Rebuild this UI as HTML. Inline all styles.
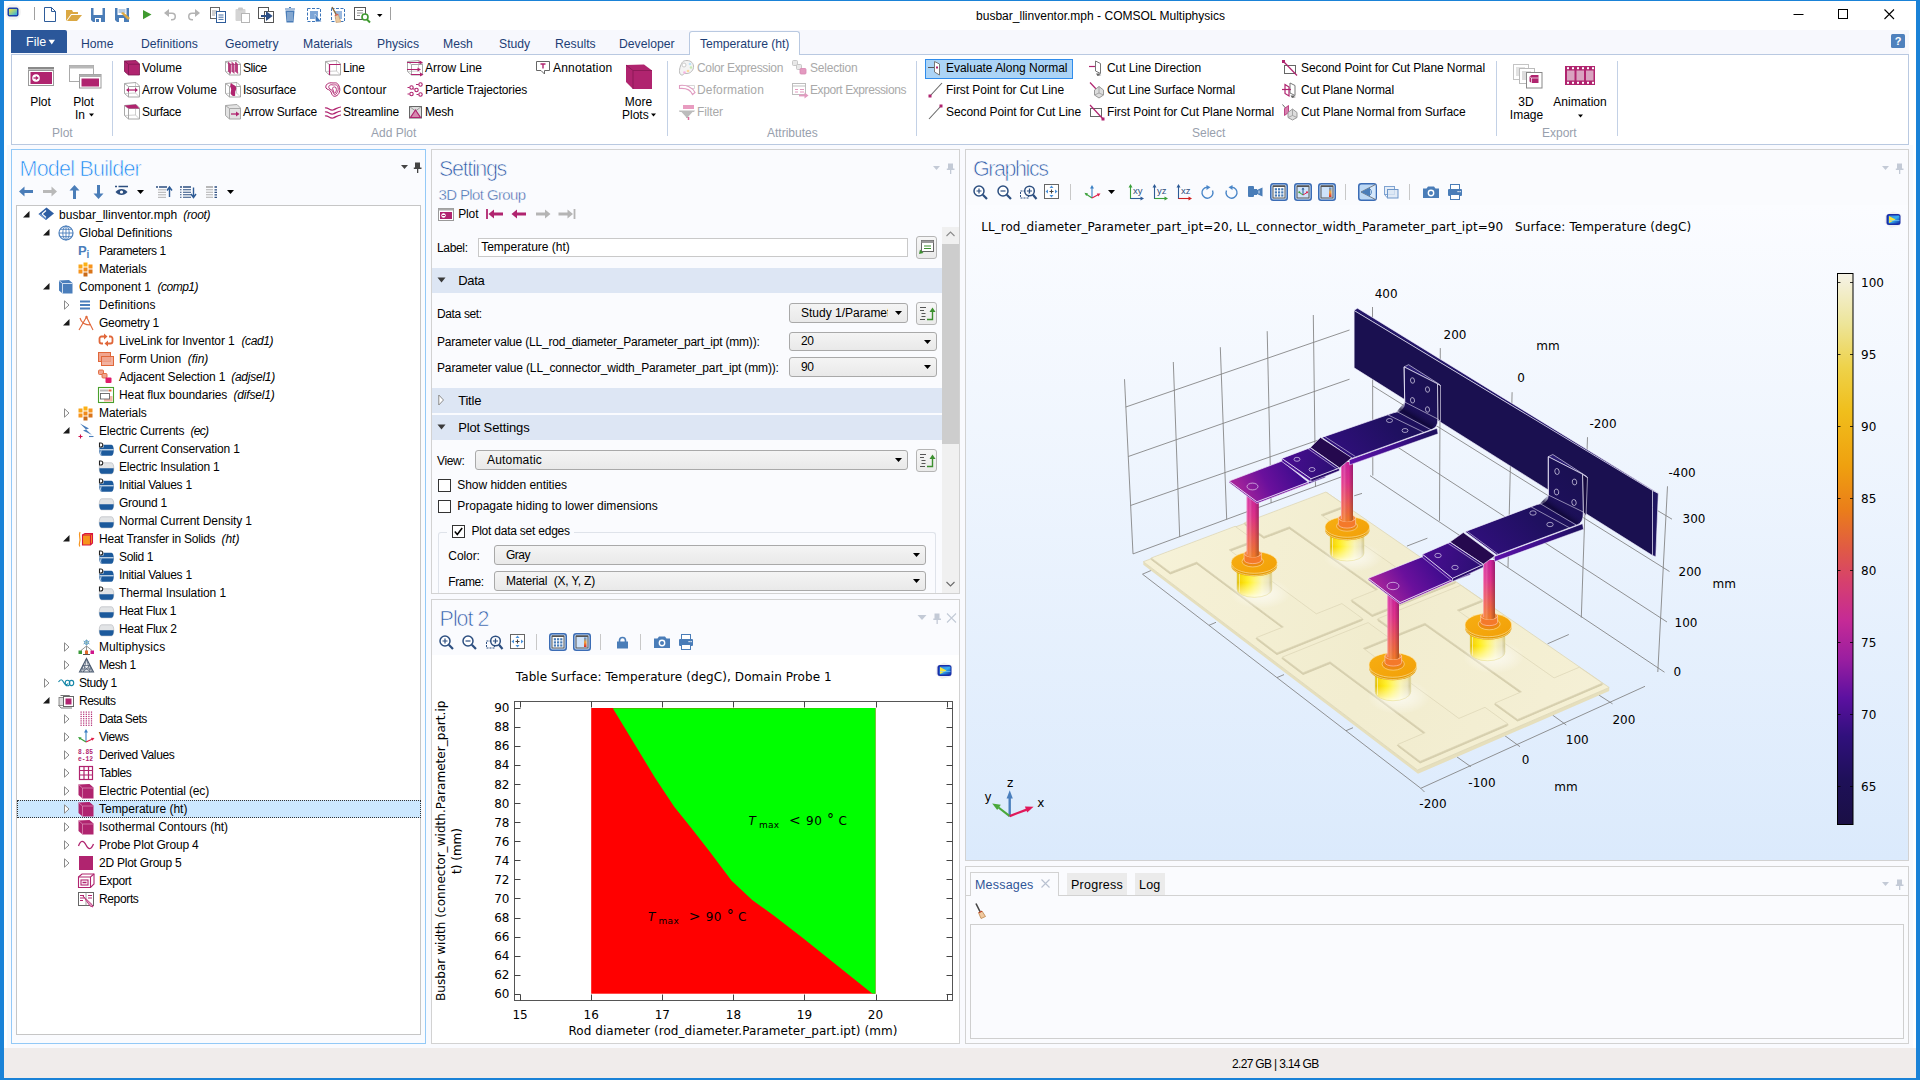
<!DOCTYPE html>
<html lang="en"><head><meta charset="utf-8"><title>busbar_llinventor.mph - COMSOL Multiphysics</title>
<style>
*{box-sizing:border-box;margin:0;padding:0}
html,body{width:1920px;height:1080px;overflow:hidden;background:#fff}
body{font-family:"Liberation Sans",sans-serif;font-size:12px;color:#000;position:relative}
.a{position:absolute}
.t{position:absolute;white-space:pre;line-height:14px;height:14px}
.g{color:#a9a9a9}
.dj{font-family:"DejaVu Sans",sans-serif}
svg{position:absolute;overflow:visible}
i{font-style:italic}
</style></head>
<body>
<div class="a" style="left:0px;top:0px;width:1920px;height:1080px;background:#fff"></div>
<div class="a" style="left:7px;top:145px;width:1906px;height:903px;background:#f9fafe"></div>
<div class="a" style="left:0px;top:0px;width:4px;height:1080px;background:#1a82d7"></div>
<div class="a" style="left:1916px;top:0px;width:4px;height:1080px;background:#1a82d7"></div>
<div class="a" style="left:0px;top:0px;width:1920px;height:1px;background:#1a82d7"></div>
<div class="a" style="left:0px;top:1078px;width:1920px;height:2px;background:#1a82d7"></div>
<div class="a" style="left:4px;top:1048px;width:1912px;height:30px;background:#f0eceb"></div>
<div class="t " style="left:1232px;top:1057px;letter-spacing:-0.667px;">2.27 GB | 3.14 GB</div>
<div class="t " style="left:976px;top:9px;letter-spacing:0.016px;">busbar_llinventor.mph - COMSOL Multiphysics</div>
<svg style="left:1790px;top:5px" width="110" height="20" viewBox="0 0 110 20"><path d="M3.5 9.5h10" stroke="#000" fill="none"/><rect x="48.5" y="4.5" width="9" height="9" stroke="#000" fill="none"/><path d="M94.5 4.5l9.5 9.5M104 4.5l-9.5 9.5" stroke="#000" stroke-width="1.1" fill="none"/></svg>
<svg style="left:0px;top:0px" width="400" height="30" viewBox="0 0 400 30"><defs><linearGradient id="lg1" x1="0" y1="0" x2="1" y2="1"><stop offset="0" stop-color="#f7e23a"/><stop offset=".6" stop-color="#7fc8a0"/><stop offset="1" stop-color="#2aa6e8"/></linearGradient></defs><circle cx="13" cy="12" r="8" fill="#eee" opacity=".7"/><rect x="7.5" y="7.5" width="11" height="9" rx="2" fill="#1c3fa8"/><rect x="9" y="9" width="8" height="6" fill="url(#lg1)"/><path d="M34.5 7v13M390.5 7v13" stroke="#a0a0a0"/><path d="M44.5 7.5h7l4 4v10h-11z" fill="#fff" stroke="#2e5c9a"/><path d="M51.5 7.5v4h4" fill="none" stroke="#2e5c9a"/><path d="M66 10h6l1 2h5v2h-7l-5 7z" fill="#dba843"/><path d="M71.5 15h10.5l-5 6h-10z" fill="#dba843"/><path d="M91 8h14v14h-12l-2-2z" fill="#4a7db8"/><rect x="93.500" y="8" width="9" height="7" fill="#fff"/><rect x="95" y="18" width="6" height="4" fill="#fff"/><rect x="96" y="19" width="3" height="3" fill="#4a7db8"/><path d="M115 8h14v14h-12l-2-2z" fill="#4a7db8"/><rect x="117.500" y="8" width="9" height="7" fill="#fff"/><path d="M118.500 10h7M118.500 12h7" stroke="#4a7db8" stroke-width=".8"/><rect x="119" y="18" width="5" height="4" fill="#fff"/><path d="M121 13l7 7 2-2-7-6z" fill="#dba843"/><path d="M143 10l8.500 4.600-8.500 4.600z" fill="#3f9a2f"/><path d="M169 9l-5 4 5 4v-3h3a2.500 2.500 0 0 1 0 5h-1v1.500h1a4 4 0 0 0 0-8h-3z" fill="#b3b3b3"/><path d="M195 9l5 4-5 4v-3h-3a2.500 2.500 0 0 0 0 5h1v1.500h-1a4 4 0 0 1 0-8h3z" fill="#b3b3b3"/><rect x="210.500" y="7.500" width="9" height="11" fill="#fff" stroke="#666"/><path d="M212 11h5M212 13h5M212 15h3" stroke="#888" stroke-width=".8"/><rect x="216.500" y="11.500" width="9" height="11" fill="#fff" stroke="#2e5c9a"/><path d="M218.500 15h5M218.500 17.200h5M218.500 19.400h5" stroke="#2e5c9a" stroke-width=".9"/><rect x="235.500" y="9" width="10" height="12" rx="1" fill="#d4d4d4"/><rect x="238" y="7.500" width="5" height="3" rx="1" fill="#c8c8c8"/><rect x="241.500" y="13.500" width="8" height="9" fill="#fff" stroke="#b5b5b5"/><rect x="258.500" y="7.500" width="10" height="11" fill="#fff" stroke="#555"/><rect x="264.500" y="11.500" width="9" height="11" fill="#fff" stroke="#555"/><path d="M261 16h8M267 13l4 3-4 3z" stroke="#2c4f86" stroke-width="2" fill="#2c4f86"/><path d="M285 9h10M289 7.500h2" stroke="#4a7db8" stroke-width="1.200"/><path d="M285.500 10.500h9l-1 12h-7z" fill="#4a7db8"/><path d="M288 12v9M290 12v9M292 12v9" stroke="#dce7f5" stroke-width=".8"/><rect x="307.500" y="8.500" width="13" height="13" fill="none" stroke="#3b74b9" stroke-dasharray="3 1.500"/><rect x="310" y="11" width="8" height="8" fill="#7fa6d6"/><path d="M315 14l6.500 8-3-.5-3 .5z" fill="#3b74b9" stroke="#fff" stroke-width=".5"/><rect x="331.500" y="8.500" width="13" height="13" fill="none" stroke="#3b74b9" stroke-dasharray="3 1.500"/><rect x="335" y="11" width="7" height="8" fill="#9bb9df"/><path d="M332 7l5 9" stroke="#8a6a3b" stroke-width="1.500"/><path d="M335 15l3-1 3 8-5 .5z" fill="#e8c9a0" stroke="#b5895a" stroke-width=".5"/><path d="M335 15.500l3-1" stroke="#d9534f" stroke-width="1.200"/><rect x="354.500" y="7.500" width="11" height="12" fill="#fff" stroke="#555"/><path d="M357 10.500h6M357 13h6M357 15.500h3" stroke="#777" stroke-width=".8"/><circle cx="365" cy="17" r="3" fill="#fff" stroke="#3f9a2f" stroke-width="1.600"/><path d="M367 19.500l3 3" stroke="#3f9a2f" stroke-width="2"/><path d="M377 14h5.500l-2.750 3z" fill="#000"/></svg>
<div class="a" style="left:11px;top:149px;width:415px;height:895px;background:#fafbfe;border:1px solid #93c9f7"></div>
<div class="a" style="left:16px;top:205px;width:405px;height:830px;background:#fff;border:1px solid #c6c6c6"></div>
<div class="a" style="left:431px;top:149px;width:529px;height:445px;background:#fafbfe;border:1px solid #d2d2d2"></div>
<div class="a" style="left:431px;top:599px;width:529px;height:445px;background:#fafbfe;border:1px solid #d2d2d2"></div>
<div class="a" style="left:965px;top:149px;width:944px;height:712px;background:#fafbfe;border:1px solid #d2d2d2"></div>
<div class="a" style="left:965px;top:866px;width:944px;height:178px;background:#fafbfe;border:1px solid #d2d2d2"></div>
<div class="a" style="left:11px;top:30px;width:1898px;height:24px;background:#f7f8fd"></div>
<div class="a" style="left:11px;top:54px;width:1898px;height:91px;background:#fff;border:1px solid #b9c9e1"></div>
<div class="a" style="left:11px;top:30px;width:56px;height:23px;background:#2b579a;border-radius:0 2px 0 0"></div>
<div class="t " style="left:26px;top:35px;color:#fff;font-size:12.5px">File</div>
<svg style="left:48px;top:39px" width="8" height="6" viewBox="0 0 8 6"><path d="M0.500 0.800h6.500l-3.250 4.700z" fill="#fff"/></svg>
<div class="t " style="left:81px;top:37px;color:#1d3e75;font-size:12.2px">Home</div>
<div class="t " style="left:141px;top:37px;color:#1d3e75;font-size:12.2px">Definitions</div>
<div class="t " style="left:225px;top:37px;color:#1d3e75;font-size:12.2px">Geometry</div>
<div class="t " style="left:303px;top:37px;color:#1d3e75;font-size:12.2px">Materials</div>
<div class="t " style="left:377px;top:37px;color:#1d3e75;font-size:12.2px">Physics</div>
<div class="t " style="left:443px;top:37px;color:#1d3e75;font-size:12.2px">Mesh</div>
<div class="t " style="left:499px;top:37px;color:#1d3e75;font-size:12.2px">Study</div>
<div class="t " style="left:555px;top:37px;color:#1d3e75;font-size:12.2px">Results</div>
<div class="t " style="left:619px;top:37px;color:#1d3e75;font-size:12.2px">Developer</div>
<div class="a" style="left:689px;top:31px;width:111px;height:24px;background:#fff;border:1px solid #b9c9e1;border-bottom:none;border-radius:3px 3px 0 0"></div>
<div class="t " style="left:700px;top:37px;color:#1d3e75;font-size:12.2px;letter-spacing:-0.05px">Temperature (ht)</div>
<div class="a" style="left:1891px;top:34px;width:14px;height:14px;background:#4f81bd;border-radius:1.500px;color:#fff;font-weight:bold;font-size:11px;line-height:14px;text-align:center">?</div>
<div class="a" style="left:112px;top:61px;width:1px;height:75px;background:#c3d1e6"></div>
<div class="a" style="left:667px;top:61px;width:1px;height:75px;background:#c3d1e6"></div>
<div class="a" style="left:916px;top:61px;width:1px;height:75px;background:#c3d1e6"></div>
<div class="a" style="left:1496px;top:61px;width:1px;height:75px;background:#c3d1e6"></div>
<div class="a" style="left:1617px;top:61px;width:1px;height:75px;background:#c3d1e6"></div>
<div class="t " style="left:52px;top:126px;color:#98a0ad;font-size:12px">Plot</div>
<div class="t " style="left:371px;top:126px;color:#98a0ad;font-size:12px">Add Plot</div>
<div class="t " style="left:767px;top:126px;color:#98a0ad;font-size:12px">Attributes</div>
<div class="t " style="left:1192px;top:126px;color:#98a0ad;font-size:12px">Select</div>
<div class="t " style="left:1542px;top:126px;color:#98a0ad;font-size:12px">Export</div>
<svg style="left:124px;top:60px" width="16" height="16" viewBox="0 0 16 16"><path d="M0.500 1L12 0.500L15.500 4v11H4.500L0.500 11.500z" fill="#b0246f" stroke="#7d1650" stroke-width=".8"/><path d="M0.500 1L4.500 4.200H15.500M4.500 4.200V15" fill="none" stroke="#7d1650" stroke-width=".8"/></svg>
<div class="t " style="left:142px;top:61px;letter-spacing:-0.004px;">Volume</div>
<svg style="left:124px;top:82px" width="16" height="16" viewBox="0 0 16 16"><path d="M0.500 1.500L12 0.500L15.500 4v11H4.500L0.500 11.500z" fill="none" stroke="#a8a8a8"/><path d="M0.500 1.500L4.500 4.500H15.500M4.500 4.500V15" fill="none" stroke="#a8a8a8"/><path d="M0.500 11.500L11.500 11L15.500 15M11.500 11V0.500" fill="none" stroke="#a8a8a8" stroke-width=".7" opacity=".8"/><path d="M3 8h10" stroke="#b0246f" stroke-width="1.300"/><path d="M2 8l3-2.200v4.400zM14 8l-3-2.200v4.400z" fill="#b0246f"/></svg>
<div class="t " style="left:142px;top:83px;letter-spacing:0.025px;">Arrow Volume</div>
<svg style="left:124px;top:104px" width="16" height="16" viewBox="0 0 16 16"><path d="M0.500 1.500L12 0.500L15.500 4v11H4.500L0.500 11.500z" fill="none" stroke="#a8a8a8"/><path d="M0.500 1.500L4.500 4.500H15.500M4.500 4.500V15" fill="none" stroke="#a8a8a8"/><path d="M0.500 11.500L11.500 11L15.500 15M11.500 11V0.500" fill="none" stroke="#a8a8a8" stroke-width=".7" opacity=".8"/><path d="M0.500 1.500L12 0.500L15.500 4.500H4.500z" fill="#b0246f"/></svg>
<div class="t " style="left:142px;top:105px;letter-spacing:-0.337px;">Surface</div>
<svg style="left:225px;top:60px" width="16" height="16" viewBox="0 0 16 16"><path d="M0.500 1.500L12 0.500L15.500 4v11H4.500L0.500 11.500z" fill="none" stroke="#a8a8a8"/><path d="M0.500 1.500L4.500 4.500H15.500M4.500 4.500V15" fill="none" stroke="#a8a8a8"/><path d="M0.500 11.500L11.500 11L15.500 15M11.500 11V0.500" fill="none" stroke="#a8a8a8" stroke-width=".7" opacity=".8"/><path d="M3 1.500l3 2.500v10l-3-2.500zM6.500 1.500l3 2.500v10l-3-2.500zM10 1.500l3 2.500v10l-3-2.500z" fill="#b0246f" opacity=".85"/></svg>
<div class="t " style="left:243px;top:61px;letter-spacing:-0.462px;">Slice</div>
<svg style="left:225px;top:82px" width="16" height="16" viewBox="0 0 16 16"><path d="M0.500 1.500L12 0.500L15.500 4v11H4.500L0.500 11.500z" fill="none" stroke="#a8a8a8"/><path d="M0.500 1.500L4.500 4.500H15.500M4.500 4.500V15" fill="none" stroke="#a8a8a8"/><path d="M0.500 11.500L11.500 11L15.500 15M11.500 11V0.500" fill="none" stroke="#a8a8a8" stroke-width=".7" opacity=".8"/><path d="M6 1c2 2 4 2 5 4s-1 4-1 6 1 3-1 3-4-2-3-5-2-4 0-8z" fill="#b0246f"/></svg>
<div class="t " style="left:243px;top:83px;letter-spacing:-0.236px;">Isosurface</div>
<svg style="left:225px;top:104px" width="16" height="16" viewBox="0 0 16 16"><path d="M0.500 1.500L12 0.500L15.500 4v11H4.500L0.500 11.500z" fill="#e3e3e3" stroke="#a8a8a8"/><path d="M0.500 1.500L4.500 4.500H15.500M4.500 4.500V15" fill="none" stroke="#a8a8a8"/><path d="M6 10h6" stroke="#b0246f" stroke-width="1.300"/><path d="M14.500 10l-3.500-2.500v5z" fill="#b0246f"/></svg>
<div class="t " style="left:243px;top:105px;letter-spacing:-0.156px;">Arrow Surface</div>
<svg style="left:325px;top:60px" width="16" height="16" viewBox="0 0 16 16"><path d="M0.500 1.500L12 0.500L15.500 4v11H4.500L0.500 11.500z" fill="none" stroke="#a8a8a8"/><path d="M0.500 1.500L4.500 4.500H15.500M4.500 4.500V15" fill="none" stroke="#a8a8a8"/><path d="M0.500 11.500L11.500 11L15.500 15M11.500 11V0.500" fill="none" stroke="#a8a8a8" stroke-width=".7" opacity=".8"/><path d="M4.500 15V4.500H15.500" fill="none" stroke="#b0246f" stroke-width="1.200"/></svg>
<div class="t " style="left:343px;top:61px;letter-spacing:-0.246px;">Line</div>
<svg style="left:325px;top:82px" width="16" height="16" viewBox="0 0 16 16"><path d="M8 1C3 0 0 3 1 6c1 2 4 1 5 4s2 5 5 4 5-6 3-10S11 1 8 1z" fill="none" stroke="#b0246f"/><path d="M8 3C5 2 3 4 4 6s3 1 4 4 2 3 3 2 3-4 2-7-3-2-5-2z" fill="none" stroke="#b0246f" stroke-width=".9"/><path d="M9 5c-1 0-2 1-1 3s1 4 2 3 2-3 1-5-1-1-2-1z" fill="none" stroke="#b0246f" stroke-width=".9"/></svg>
<div class="t " style="left:343px;top:83px;letter-spacing:0.144px;">Contour</div>
<svg style="left:325px;top:104px" width="16" height="16" viewBox="0 0 16 16"><path d="M0 4c3-1 5 3 8 2s5-3 8-3M0 8c3-1 5 3 8 2s5-3 8-3M0 12c3-1 5 3 8 2s5-3 8-3" fill="none" stroke="#b0246f" stroke-width="1.200"/></svg>
<div class="t " style="left:343px;top:105px;letter-spacing:-0.136px;">Streamline</div>
<svg style="left:407px;top:60px" width="16" height="16" viewBox="0 0 16 16"><path d="M0.500 1.500L12 0.500L15.500 4v11H4.500L0.500 11.500z" fill="none" stroke="#a8a8a8"/><path d="M0.500 1.500L4.500 4.500H15.500M4.500 4.500V15" fill="none" stroke="#a8a8a8"/><path d="M0.500 11.500L11.500 11L15.500 15M11.500 11V0.500" fill="none" stroke="#a8a8a8" stroke-width=".7" opacity=".8"/><path d="M0 2.500h13M0 9.500h11M4 14.500h10" stroke="#b0246f" stroke-width="1.100"/><path d="M16 2.500l-3.500-2v4zM14 9.500l-3.500-2v4zM16.500 14.500l-3.500-2v4z" fill="#b0246f"/></svg>
<div class="t " style="left:425px;top:61px;letter-spacing:-0.036px;">Arrow Line</div>
<svg style="left:407px;top:82px" width="16" height="16" viewBox="0 0 16 16"><g fill="#fff" stroke="#b0246f" stroke-width="1.100"><circle cx="13.500" cy="2.500" r="1.700"/><circle cx="4.500" cy="5.500" r="1.700"/><circle cx="9.500" cy="8" r="1.700"/><circle cx="4.500" cy="12" r="1.700"/><circle cx="13.500" cy="12.500" r="1.700"/></g><path d="M9 2.500h2.500M0.500 5.500h2M6 7h1.500M0.500 12h2M9.500 12.500h2" stroke="#b0246f"/></svg>
<div class="t " style="left:425px;top:83px;letter-spacing:-0.160px;">Particle Trajectories</div>
<svg style="left:407px;top:104px" width="16" height="16" viewBox="0 0 16 16"><rect x="2.500" y="2.500" width="12" height="11.500" fill="#ddd" stroke="#666"/><path d="M2.500 2.500L8.500 7 14.500 2.500" fill="none" stroke="#888" stroke-width=".8"/><path d="M8.500 6L13.500 13.500H3.500z" fill="#d58aae" stroke="#b0246f" stroke-width="1.200"/></svg>
<div class="t " style="left:425px;top:105px;letter-spacing:-0.211px;">Mesh</div>
<svg style="left:536px;top:60px" width="16" height="16" viewBox="0 0 16 16"><path d="M0.500 1.500h13v9h-5v3.500l-3.500-3.500h-4.500z" fill="#fff" stroke="#666"/><path d="M4.500 4h5M7 4v4.500" stroke="#b0246f" stroke-width="1.400"/></svg>
<div class="t " style="left:553px;top:61px;letter-spacing:0.212px;">Annotation</div>
<svg style="left:679px;top:60px" width="16" height="16" viewBox="0 0 16 16"><path d="M8 0.500c4 0 7 3 6.500 7S10 14 7 13.500 5 15.500 2.500 15 0 10 1.500 6 4 0.500 8 0.500z" fill="#f4f4f4" stroke="#bbb"/><circle cx="5" cy="5" r="2" fill="#fff" stroke="#ccc"/><circle cx="11" cy="4" r="1.300" fill="#bfe3f7"/><circle cx="12" cy="7.500" r="1.300" fill="#c7eab5"/><circle cx="9" cy="11" r="1.300" fill="#fbd9a0"/><circle cx="5.500" cy="12.500" r="1.300" fill="#f7b3e0"/></svg>
<div class="t g" style="left:697px;top:61px;letter-spacing:-0.336px;">Color Expression</div>
<svg style="left:679px;top:82px" width="16" height="16" viewBox="0 0 16 16"><path d="M0.500 3.500h15v3h-8z" fill="#fff" stroke="#ccc" stroke-width=".8"/><path d="M0.500 3.500c7-1 13 2 15.500 7l-2.500 2c-2-5-7-6.500-13-6z" fill="#fff" stroke="#e09cc1" stroke-width="1.100"/></svg>
<div class="t g" style="left:697px;top:83px;letter-spacing:0.149px;">Deformation</div>
<svg style="left:679px;top:104px" width="16" height="16" viewBox="0 0 16 16"><rect x="4" y="1" width="11" height="4" fill="#e89cc0"/><path d="M0 6.500h16l-1 1.500h-1.500l-4.500 5v1h-2v-1l-4.500-5h-2z" fill="#bcbcbc"/><path d="M9.500 13v3" stroke="#e06a9f" stroke-width="1.500"/></svg>
<div class="t g" style="left:697px;top:105px;letter-spacing:-0.111px;">Filter</div>
<svg style="left:792px;top:60px" width="16" height="16" viewBox="0 0 16 16"><g fill="#e8e8e8" stroke="#bdbdbd" stroke-width=".8"><rect x="0.500" y="0.500" width="5" height="5" rx="1"/><rect x="4.500" y="4.500" width="5" height="5" rx="1"/></g><rect x="8" y="8.500" width="6" height="5.500" rx="1" fill="#e39ac0" stroke="#d887b1" stroke-width=".8"/></svg>
<div class="t g" style="left:810px;top:61px;letter-spacing:-0.207px;">Selection</div>
<svg style="left:792px;top:82px" width="16" height="16" viewBox="0 0 16 16"><rect x="0.500" y="1.500" width="13" height="11" fill="#fff" stroke="#bdbdbd"/><path d="M0.500 4h13" stroke="#bdbdbd"/><path d="M3 7.500h3M3 10h3M8 7.500h4M8 10h4" stroke="#e39ac0" stroke-width="1.100"/><path d="M7 13.500h6" stroke="#e39ac0" stroke-width="1.800"/><path d="M16.500 13.500l-4-3v6z" fill="#e39ac0"/></svg>
<div class="t g" style="left:810px;top:83px;letter-spacing:-0.410px;">Export Expressions</div>
<div class="a" style="left:925px;top:59px;width:148px;height:20px;background:#acd4f6;border:1px solid #2f8cec"></div>
<svg style="left:928px;top:60px" width="16" height="16" viewBox="0 0 16 16"><path d="M0 7.500h8" stroke="#555" stroke-width="1"/><path d="M6.500 1.500L11.500 4v11L6.500 12z" fill="#fff" stroke="#777"/><rect x="8" y="6.500" width="2" height="2" fill="#b0246f"/></svg>
<div class="t " style="left:946px;top:61px;letter-spacing:-0.027px;">Evaluate Along Normal</div>
<svg style="left:928px;top:82px" width="16" height="16" viewBox="0 0 16 16"><path d="M2 14L14 1" stroke="#666" stroke-width="1.100"/><rect x="0.500" y="12.500" width="3" height="3" fill="#b0246f"/></svg>
<div class="t " style="left:946px;top:83px;letter-spacing:-0.057px;">First Point for Cut Line</div>
<svg style="left:928px;top:104px" width="16" height="16" viewBox="0 0 16 16"><path d="M1 15L13 2" stroke="#666" stroke-width="1.100"/><rect x="11.500" y="0.500" width="3" height="3" fill="#b0246f"/></svg>
<div class="t " style="left:946px;top:105px;letter-spacing:-0.070px;">Second Point for Cut Line</div>
<svg style="left:1089px;top:60px" width="16" height="16" viewBox="0 0 16 16"><path d="M0 6.500h8" stroke="#b0246f" stroke-width="1.200"/><path d="M6.500 1L11.500 3.500v10L6.500 11z" fill="#fff" stroke="#777"/><path d="M7 13.500h4l-.5 1 2 .5-4 1z" fill="#666"/></svg>
<div class="t " style="left:1107px;top:61px;letter-spacing:-0.076px;">Cut Line Direction</div>
<svg style="left:1089px;top:82px" width="16" height="16" viewBox="0 0 16 16"><path d="M1 0.500L8 8" stroke="#b0246f" stroke-width="1.200"/><path d="M10 4.500L14.500 8v5L10 16 5.500 13V8z" fill="#ddd" stroke="#999"/><path d="M10 4.500v6.500l4.500 2M10 11l-4.500 2" fill="none" stroke="#999" stroke-width=".8"/></svg>
<div class="t " style="left:1107px;top:83px;letter-spacing:-0.147px;">Cut Line Surface Normal</div>
<svg style="left:1089px;top:104px" width="16" height="16" viewBox="0 0 16 16"><rect x="1.500" y="4.500" width="11" height="8" fill="#fff" stroke="#666"/><path d="M1 1L14 15" stroke="#b0246f" stroke-width="1.200"/><rect x="12.500" y="13.500" width="3" height="3" fill="#b0246f"/></svg>
<div class="t " style="left:1107px;top:105px;letter-spacing:-0.075px;">First Point for Cut Plane Normal</div>
<svg style="left:1282px;top:60px" width="16" height="16" viewBox="0 0 16 16"><rect x="2.500" y="5.500" width="11" height="8" fill="#fff" stroke="#666"/><path d="M1.500 1.500L15 15.500" stroke="#b0246f" stroke-width="1.200"/><rect x="0" y="0" width="3" height="3" fill="#b0246f"/></svg>
<div class="t " style="left:1301px;top:61px;letter-spacing:-0.084px;">Second Point for Cut Plane Normal</div>
<svg style="left:1282px;top:82px" width="16" height="16" viewBox="0 0 16 16"><path d="M8 1L13 3.500v10L8 11z" fill="#fff" stroke="#777"/><path d="M0 7.500h9" stroke="#b0246f" stroke-width="1.200"/><path d="M3 2.500l4 2.500v9l-4-2.500z" fill="none" stroke="#b0246f" stroke-width="1.200"/><path d="M8.500 13.500h4l-.5 1 2 .5-4 1z" fill="#666"/></svg>
<div class="t " style="left:1301px;top:83px;letter-spacing:-0.107px;">Cut Plane Normal</div>
<svg style="left:1282px;top:104px" width="16" height="16" viewBox="0 0 16 16"><path d="M0.500 0.500L6 7" stroke="#666" stroke-width="1"/><path d="M2.500 4.500l4-3v7l-4 3z" fill="#d77fae" stroke="#b0246f" stroke-width=".8"/><path d="M10.500 5L15 8.500v5L10.500 16 6 13.500v-5z" fill="#ddd" stroke="#999"/><path d="M10.500 5v6.500l4.500 2M10.500 11.500l-4.500 2" fill="none" stroke="#999" stroke-width=".8"/></svg>
<div class="t " style="left:1301px;top:105px;letter-spacing:-0.077px;">Cut Plane Normal from Surface</div>
<svg style="left:28px;top:67px" width="26" height="20" viewBox="0 0 26 20"><rect x="0" y="0" width="26" height="2.500" fill="#8a8a8a"/><rect x="0.500" y="3.500" width="25" height="15" fill="#fff" stroke="#9a9a9a"/><rect x="2.500" y="5" width="21.500" height="12" fill="#b0246f"/><circle cx="8" cy="11" r="3.800" fill="#fff"/><path d="M5.500 11h3" stroke="#b0246f" stroke-width="1.300"/><path d="M10.800 11l-3-2.300v4.600z" fill="#b0246f"/></svg>
<div class="t" style="left:-19.5px;width:120px;text-align:center;top:95px;">Plot</div>
<svg style="left:69px;top:65px" width="33" height="24" viewBox="0 0 33 24"><rect x="0.500" y="0.500" width="24" height="16" fill="#fff" stroke="#aaa"/><rect x="0.500" y="0.500" width="24" height="3" fill="#b8b8b8"/><rect x="10.500" y="9.500" width="21.500" height="13.500" fill="#fff" stroke="#9a9a9a"/><rect x="10.500" y="9.500" width="21.500" height="2.500" fill="#b0b0b0"/><rect x="12.500" y="13.500" width="17.500" height="8" fill="#b0246f"/></svg>
<div class="t" style="left:23.5px;width:120px;text-align:center;top:95px;">Plot</div>
<div class="t " style="left:75px;top:108px;">In</div>
<svg style="left:89px;top:113px" width="6" height="4" viewBox="0 0 6 4"><path d="M0 0.500h5l-2.500 3z" fill="#000"/></svg>
<svg style="left:625px;top:64px" width="28" height="26" viewBox="0 0 28 26"><path d="M1 1L19 0.500L27 6.500V25H8L1 18z" fill="#b0246f"/><path d="M1 1L8 6.500H27M8 6.500V25" fill="none" stroke="#8a1a56" stroke-width=".9"/></svg>
<div class="t" style="left:578.5px;width:120px;text-align:center;top:95px;">More</div>
<div class="t " style="left:622px;top:108px;">Plots</div>
<svg style="left:651px;top:113px" width="6" height="4" viewBox="0 0 6 4"><path d="M0 0.500h5l-2.500 3z" fill="#000"/></svg>
<svg style="left:1513px;top:64px" width="30" height="25" viewBox="0 0 30 25"><rect x="0.500" y="0.500" width="15" height="15" fill="#fff" stroke="#c4c4c4"/><rect x="3" y="3" width="9" height="9" fill="#e2e2e2"/><rect x="6.500" y="4.500" width="15" height="15" fill="#fff" stroke="#bbb"/><rect x="9" y="7" width="9" height="9" fill="#dcdcdc"/><rect x="13.500" y="8.500" width="15.500" height="15.500" fill="#fff" stroke="#888"/><path d="M16.500 12.500l2-1.500h7v8h-7l-2-1.500z" fill="#b0246f"/><path d="M16.500 12.500l2 1.500h7M18.500 14v5" stroke="#fff" stroke-width=".7" fill="none"/></svg>
<div class="t" style="left:1466px;width:120px;text-align:center;top:95px;">3D</div>
<div class="t" style="left:1466.5px;width:120px;text-align:center;top:108px;">Image</div>
<svg style="left:1565px;top:66px" width="30" height="19" viewBox="0 0 30 19"><rect x="0" y="0" width="30" height="19" fill="#b0246f"/><rect x="2" y="4.500" width="7.5" height="10" fill="#d9a3bf"/><rect x="11.5" y="4.500" width="7.5" height="10" fill="#d9a3bf"/><rect x="21" y="4.500" width="7.5" height="10" fill="#d9a3bf"/><rect x="2" y="1.200" width="2" height="2" fill="#fff"/><rect x="2" y="15.800" width="2" height="2" fill="#fff"/><rect x="7" y="1.200" width="2" height="2" fill="#fff"/><rect x="7" y="15.800" width="2" height="2" fill="#fff"/><rect x="12" y="1.200" width="2" height="2" fill="#fff"/><rect x="12" y="15.800" width="2" height="2" fill="#fff"/><rect x="17" y="1.200" width="2" height="2" fill="#fff"/><rect x="17" y="15.800" width="2" height="2" fill="#fff"/><rect x="22" y="1.200" width="2" height="2" fill="#fff"/><rect x="22" y="15.800" width="2" height="2" fill="#fff"/><rect x="27" y="1.200" width="2" height="2" fill="#fff"/><rect x="27" y="15.800" width="2" height="2" fill="#fff"/></svg>
<div class="t" style="left:1520px;width:120px;text-align:center;top:95px;">Animation</div>
<svg style="left:1578px;top:114px" width="6" height="4" viewBox="0 0 6 4"><path d="M0 0.500h5l-2.500 3z" fill="#000"/></svg>
<div class="t " style="left:19.5px;top:156px;letter-spacing:-0.766px;font-size:21.5px;line-height:26px;height:26px;color:#1484f2;-webkit-text-stroke:0.7px #fafbfe;">Model Builder</div>
<svg style="left:399.5px;top:162px" width="22" height="12" viewBox="0 0 22 12"><path d="M1 3h7l-3.500 4z" fill="#444"/><path d="M15 0.500h5v5h1.500v1.500h-3.200v4h-1.300v-4h-3.200v-1.500h1.200z" fill="#444"/></svg>
<svg style="left:19px;top:189px" width="200" height="12" viewBox="0 0 200 12"><path d="M0 2.500L5.500 -2.500V1H14v3H5.500v3.500z" fill="#4a7db8"/><path d="M38 2.500L32.500 -2.500V1H24v3h8.500v3.500z" fill="#b9b9b9"/><path d="M55.500 -4L50.500 1.500H54V10h3V1.500h3.500z" fill="#4a7db8"/><path d="M79.500 10L74.500 4.500H78V-4h3V4.500h3.500z" fill="#4a7db8"/><path d="M96 -2.500h2M99.500 -2.500h9.500" stroke="#2d4f80" stroke-width="1.600"/><path d="M96.500 3c3-4 9-4 12 0-3 4-9 4-12 0z" fill="#2d4f80"/><circle cx="102.500" cy="3" r="1.600" fill="#fff"/><path d="M118 1h7l-3.500 4z" fill="#000"/><path d="M137 -2h2M140 -2h8" stroke="#2d4f80" stroke-width="1.600"/><path d="M139 0.800h8M139 3.300h8M139 5.800h8M139 8.300h8" stroke="#b0b0b0" stroke-width="1"/><path d="M150.500 8V-1.500M148 1.500l2.500-3.500L153 1.500" stroke="#2d5b96" stroke-width="1.400" fill="none"/><path d="M161 -2h2M164 -2h8" stroke="#2d4f80" stroke-width="1.600"/><path d="M161 0.800h1.500M164 0.800h8M161 3.300h1.500M164 3.300h8M161 5.800h1.500M164 5.800h8M161 8.300h1.500M164 8.300h8" stroke="#2d4f80" stroke-width="1.100"/><path d="M174.500 -1.500V8M172 5l2.500 3.500L177 5" stroke="#2d5b96" stroke-width="1.400" fill="none"/><path d="M187 -2h7" stroke="#a8a8a8" stroke-width="1.600"/><path d="M187 0.800h7M187 3.300h7M187 5.800h7M187 8.300h7" stroke="#b0b0b0" stroke-width="1.100"/><path d="M195.500 -2h2.500M195.500 0.800h2.500M195.500 3.300h2.500M195.500 5.800h2.500M195.500 8.300h2.500" stroke="#2d4f80" stroke-width="1.300"/><path d="M208 1h7l-3.500 4z" fill="#000"/></svg>
<svg style="left:23px;top:211px" width="7" height="7" viewBox="0 0 7 7"><path d="M6.500 0v6.500H0z" fill="#1a1a1a"/></svg>
<svg style="left:38px;top:207px" width="16" height="16" viewBox="0 0 16 16"><path d="M0.500 7L8.500 0.500L16 6.500L8 13z" fill="#2e5ea3"/><path d="M4 7l4-3.500M4 7l4 3.500" stroke="#fff" stroke-width="1.200" fill="none"/><path d="M0.500 7L8 13l1-0.800-6-5.200z" fill="#6b93cc"/></svg>
<div class="t " style="left:59px;top:208px;letter-spacing:0.038px;">busbar_llinventor.mph</div>
<div class="t " style="left:183.3px;top:208px;letter-spacing:-0.279px;font-style:italic;">(root)</div>
<svg style="left:43px;top:229px" width="7" height="7" viewBox="0 0 7 7"><path d="M6.500 0v6.500H0z" fill="#1a1a1a"/></svg>
<svg style="left:58px;top:225px" width="16" height="16" viewBox="0 0 16 16"><circle cx="8" cy="8" r="7" fill="#fff" stroke="#4a7ebb" stroke-width="1.200"/><ellipse cx="8" cy="8" rx="3.200" ry="7" fill="none" stroke="#4a7ebb" stroke-width=".9"/><path d="M1 8h14M8 1v14M2.500 4.300h11M2.500 11.700h11" stroke="#4a7ebb" stroke-width=".9"/></svg>
<div class="t " style="left:79px;top:226px;letter-spacing:-0.047px;">Global Definitions</div>
<svg style="left:78px;top:243px" width="16" height="16" viewBox="0 0 16 16"><text x="0" y="12" font-family="Liberation Sans,sans-serif" font-size="13" font-weight="bold" fill="#4a7ebb">P</text><text x="8.500" y="14.500" font-family="Liberation Sans,sans-serif" font-size="10" font-weight="bold" fill="#4a7ebb">i</text></svg>
<div class="t " style="left:99px;top:244px;letter-spacing:-0.444px;">Parameters 1</div>
<svg style="left:78px;top:261px" width="16" height="16" viewBox="0 0 16 16"><rect x="0.5" y="3.5" width="4" height="4" fill="#f9a51a"/><rect x="0.5" y="8.5" width="4" height="4" fill="#f7941d"/><rect x="5.5" y="1.5" width="4" height="4" fill="#fbb116"/><rect x="5.5" y="6.5" width="4" height="4" fill="#f08a1c"/><rect x="5.5" y="11.5" width="4" height="4" fill="#c96a18"/><rect x="10.5" y="3.5" width="4" height="4" fill="#f7941d"/><rect x="10.5" y="8.5" width="4" height="4" fill="#d9741a"/></svg>
<div class="t " style="left:99px;top:262px;letter-spacing:-0.120px;">Materials</div>
<svg style="left:43px;top:283px" width="7" height="7" viewBox="0 0 7 7"><path d="M6.500 0v6.500H0z" fill="#1a1a1a"/></svg>
<svg style="left:58px;top:279px" width="16" height="16" viewBox="0 0 16 16"><path d="M1 1.500L11 1L14.500 4V14.500H4.500L1 11.500z" fill="#4a7ebb"/><path d="M1 1.500L4.500 4.500H14.500M4.500 4.500V14.500" stroke="#dfe9f6" stroke-width=".9" fill="none"/></svg>
<div class="t " style="left:79px;top:280px;letter-spacing:-0.004px;">Component 1</div>
<div class="t " style="left:157.4px;top:280px;letter-spacing:-0.473px;font-style:italic;">(comp1)</div>
<svg style="left:64px;top:300px" width="6" height="10" viewBox="0 0 6 10"><path d="M0.500 0.800L5 5L0.500 9.200z" fill="#fff" stroke="#8a8a8a" stroke-width="1"/></svg>
<svg style="left:78px;top:297px" width="16" height="16" viewBox="0 0 16 16"><path d="M2 4.500h10M2 8h10M2 11.500h10" stroke="#4a7ebb" stroke-width="1.800"/></svg>
<div class="t " style="left:99px;top:298px;letter-spacing:0.043px;">Definitions</div>
<svg style="left:63px;top:319px" width="7" height="7" viewBox="0 0 7 7"><path d="M6.500 0v6.500H0z" fill="#1a1a1a"/></svg>
<svg style="left:78px;top:315px" width="16" height="16" viewBox="0 0 16 16"><path d="M1 15L8.500 2L15 15M2 3c1 4 4 7 11 7" fill="none" stroke="#e0673a" stroke-width="1.100"/><circle cx="8.500" cy="2" r="1.200" fill="#e0673a"/></svg>
<div class="t " style="left:99px;top:316px;letter-spacing:-0.289px;">Geometry 1</div>
<svg style="left:98px;top:333px" width="16" height="16" viewBox="0 0 16 16"><path d="M7 3.500H3.500a2 2 0 0 0-2 2v3a2 2 0 0 0 2 2H5M9 10.500h3.500a2 2 0 0 0 2-2v-3a2 2 0 0 0-2-2H11" fill="none" stroke="#e0673a" stroke-width="1.800"/><path d="M6 0.500l3.500 3-3.500 3zM10 7.500l-3.500 3 3.500 3z" fill="#e0673a"/></svg>
<div class="t " style="left:119px;top:334px;letter-spacing:-0.107px;">LiveLink for Inventor 1</div>
<div class="t " style="left:241.4px;top:334px;letter-spacing:-0.369px;font-style:italic;">(cad1)</div>
<svg style="left:98px;top:351px" width="16" height="16" viewBox="0 0 16 16"><rect x="0.500" y="1.500" width="12" height="9" fill="#f0a58f" stroke="#e0673a"/><rect x="3.500" y="5.500" width="12" height="9" fill="#f0a58f" fill-opacity=".85" stroke="#e0673a"/></svg>
<div class="t " style="left:119px;top:352px;letter-spacing:-0.068px;">Form Union</div>
<div class="t " style="left:187.7px;top:352px;letter-spacing:-0.013px;font-style:italic;">(fin)</div>
<svg style="left:98px;top:369px" width="16" height="16" viewBox="0 0 16 16"><rect x="0.500" y="1" width="5" height="4.500" rx="1" fill="#f0a58f" stroke="#e0673a" stroke-width=".9"/><rect x="4" y="4.500" width="5" height="4.500" rx="1" fill="#f0a58f" stroke="#e0673a" stroke-width=".9"/><rect x="7.500" y="8.500" width="6" height="5.500" rx="1" fill="#e01b6a"/></svg>
<div class="t " style="left:119px;top:370px;letter-spacing:-0.160px;">Adjacent Selection 1</div>
<div class="t " style="left:231.2px;top:370px;letter-spacing:-0.247px;font-style:italic;">(adjsel1)</div>
<svg style="left:98px;top:387px" width="16" height="16" viewBox="0 0 16 16"><rect x="0.500" y="0.500" width="15" height="15" fill="#fff" stroke="#4aa02c" stroke-width="1.100"/><rect x="2" y="2.500" width="8" height="2" fill="#bbb"/><rect x="10.500" y="2.500" width="3" height="2" fill="#e0673a"/><rect x="6" y="9" width="8.500" height="5.500" fill="#f4b6a6"/><rect x="2.500" y="6.500" width="9" height="5.500" fill="#fff" stroke="#666" stroke-width=".9"/></svg>
<div class="t " style="left:119px;top:388px;letter-spacing:-0.093px;">Heat flux boundaries</div>
<div class="t " style="left:233.5px;top:388px;letter-spacing:-0.187px;font-style:italic;">(difsel1)</div>
<svg style="left:64px;top:408px" width="6" height="10" viewBox="0 0 6 10"><path d="M0.500 0.800L5 5L0.500 9.200z" fill="#fff" stroke="#8a8a8a" stroke-width="1"/></svg>
<svg style="left:78px;top:405px" width="16" height="16" viewBox="0 0 16 16"><rect x="0.5" y="3.5" width="4" height="4" fill="#f9a51a"/><rect x="0.5" y="8.5" width="4" height="4" fill="#f7941d"/><rect x="5.5" y="1.5" width="4" height="4" fill="#fbb116"/><rect x="5.5" y="6.5" width="4" height="4" fill="#f08a1c"/><rect x="5.5" y="11.5" width="4" height="4" fill="#c96a18"/><rect x="10.5" y="3.5" width="4" height="4" fill="#f7941d"/><rect x="10.5" y="8.5" width="4" height="4" fill="#d9741a"/></svg>
<div class="t " style="left:99px;top:406px;letter-spacing:-0.120px;">Materials</div>
<svg style="left:63px;top:427px" width="7" height="7" viewBox="0 0 7 7"><path d="M6.500 0v6.500H0z" fill="#1a1a1a"/></svg>
<svg style="left:78px;top:423px" width="16" height="16" viewBox="0 0 16 16"><path d="M2 0.500l9 5-3 1 6 5.500-9-4.500 3-1z" fill="#4a7ebb"/><path d="M0.500 13.500h4M2.500 11.500v4" stroke="#d0104c" stroke-width="1.100"/><path d="M11 13.500h4.500" stroke="#4a7ebb" stroke-width="1.100"/></svg>
<div class="t " style="left:99px;top:424px;letter-spacing:-0.199px;">Electric Currents</div>
<div class="t " style="left:190.5px;top:424px;letter-spacing:-0.717px;font-style:italic;">(ec)</div>
<svg style="left:98px;top:441px" width="16" height="16" viewBox="0 0 16 16"><path d="M3.500 3.800h10c3 0 3 11 0 11h-10c-3 0-3-11 0-11z" fill="#1c5a9c"/><path d="M1.500 8.800h14" stroke="#fff" stroke-width="1"/><path d="M3.200 9.500c-.8 2-.8 3.500 0 4.800" stroke="#cfe0f3" stroke-width="1" fill="none"/><rect x="0" y="1" width="5.500" height="5.500" fill="#fff"/><path d="M1.500 2v4h1.300a2 2 0 0 0 0-4z" fill="none" stroke="#222" stroke-width="1.100"/></svg>
<div class="t " style="left:119px;top:442px;letter-spacing:-0.153px;">Current Conservation 1</div>
<svg style="left:98px;top:459px" width="16" height="16" viewBox="0 0 16 16"><path d="M3.500 3.800h10c3 0 3 11 0 11h-10c-3 0-3-11 0-11z" fill="#e2e4e6" stroke="#b9bcc0" stroke-width=".7"/><path d="M1.300 9.300h14.400c0 3-0.800 5.500-2.200 5.500h-10c-1.400 0-2.200-2.500-2.200-5.500z" fill="#1c5a9c"/><rect x="0" y="1" width="5.500" height="5.500" fill="#fff"/><path d="M1.500 2v4h1.300a2 2 0 0 0 0-4z" fill="none" stroke="#222" stroke-width="1.100"/></svg>
<div class="t " style="left:119px;top:460px;letter-spacing:-0.164px;">Electric Insulation 1</div>
<svg style="left:98px;top:477px" width="16" height="16" viewBox="0 0 16 16"><path d="M3.500 3.800h10c3 0 3 11 0 11h-10c-3 0-3-11 0-11z" fill="#1c5a9c"/><path d="M1.500 8.800h14" stroke="#fff" stroke-width="1"/><path d="M3.200 9.500c-.8 2-.8 3.500 0 4.800" stroke="#cfe0f3" stroke-width="1" fill="none"/><rect x="0" y="1" width="5.500" height="5.500" fill="#fff"/><path d="M1.500 2v4h1.300a2 2 0 0 0 0-4z" fill="none" stroke="#222" stroke-width="1.100"/></svg>
<div class="t " style="left:119px;top:478px;letter-spacing:-0.272px;">Initial Values 1</div>
<svg style="left:98px;top:495px" width="16" height="16" viewBox="0 0 16 16"><path d="M3.500 3.800h10c3 0 3 11 0 11h-10c-3 0-3-11 0-11z" fill="#e2e4e6" stroke="#b9bcc0" stroke-width=".7"/><path d="M1.300 9.300h14.400c0 3-0.800 5.500-2.200 5.500h-10c-1.400 0-2.200-2.500-2.200-5.500z" fill="#1c5a9c"/></svg>
<div class="t " style="left:119px;top:496px;letter-spacing:-0.267px;">Ground 1</div>
<svg style="left:98px;top:513px" width="16" height="16" viewBox="0 0 16 16"><path d="M3.500 3.800h10c3 0 3 11 0 11h-10c-3 0-3-11 0-11z" fill="#e2e4e6" stroke="#b9bcc0" stroke-width=".7"/><path d="M1.300 9.300h14.400c0 3-0.800 5.500-2.200 5.500h-10c-1.400 0-2.200-2.500-2.200-5.500z" fill="#1c5a9c"/></svg>
<div class="t " style="left:119px;top:514px;letter-spacing:-0.103px;">Normal Current Density 1</div>
<svg style="left:63px;top:535px" width="7" height="7" viewBox="0 0 7 7"><path d="M6.500 0v6.500H0z" fill="#1a1a1a"/></svg>
<svg style="left:78px;top:531px" width="16" height="16" viewBox="0 0 16 16"><path d="M2 1c-2 4 1.500 6-.5 11-.5 1.500 0 3 .5 3.500" stroke="#f7941d" stroke-width="1.200" fill="none"/><path d="M4.500 4L7 2.500h7.500V12L12.500 14H4.500z" fill="#f7941d" stroke="#d8163c" stroke-width="1.100"/><path d="M4.500 4h8V14M12.500 4l2-1.500" stroke="#d8163c" stroke-width="1.100" fill="none"/></svg>
<div class="t " style="left:99px;top:532px;letter-spacing:-0.217px;">Heat Transfer in Solids</div>
<div class="t " style="left:221.5px;top:532px;letter-spacing:-0.025px;font-style:italic;">(ht)</div>
<svg style="left:98px;top:549px" width="16" height="16" viewBox="0 0 16 16"><path d="M3.500 3.800h10c3 0 3 11 0 11h-10c-3 0-3-11 0-11z" fill="#1c5a9c"/><path d="M1.500 8.800h14" stroke="#fff" stroke-width="1"/><path d="M3.200 9.500c-.8 2-.8 3.500 0 4.800" stroke="#cfe0f3" stroke-width="1" fill="none"/><rect x="0" y="1" width="5.500" height="5.500" fill="#fff"/><path d="M1.500 2v4h1.300a2 2 0 0 0 0-4z" fill="none" stroke="#222" stroke-width="1.100"/></svg>
<div class="t " style="left:119px;top:550px;letter-spacing:-0.370px;">Solid 1</div>
<svg style="left:98px;top:567px" width="16" height="16" viewBox="0 0 16 16"><path d="M3.500 3.800h10c3 0 3 11 0 11h-10c-3 0-3-11 0-11z" fill="#1c5a9c"/><path d="M1.500 8.800h14" stroke="#fff" stroke-width="1"/><path d="M3.200 9.500c-.8 2-.8 3.500 0 4.800" stroke="#cfe0f3" stroke-width="1" fill="none"/><rect x="0" y="1" width="5.500" height="5.500" fill="#fff"/><path d="M1.500 2v4h1.300a2 2 0 0 0 0-4z" fill="none" stroke="#222" stroke-width="1.100"/></svg>
<div class="t " style="left:119px;top:568px;letter-spacing:-0.272px;">Initial Values 1</div>
<svg style="left:98px;top:585px" width="16" height="16" viewBox="0 0 16 16"><path d="M3.500 3.800h10c3 0 3 11 0 11h-10c-3 0-3-11 0-11z" fill="#e2e4e6" stroke="#b9bcc0" stroke-width=".7"/><path d="M1.300 9.300h14.400c0 3-0.800 5.500-2.200 5.500h-10c-1.400 0-2.200-2.500-2.200-5.500z" fill="#1c5a9c"/><rect x="0" y="1" width="5.500" height="5.500" fill="#fff"/><path d="M1.500 2v4h1.300a2 2 0 0 0 0-4z" fill="none" stroke="#222" stroke-width="1.100"/></svg>
<div class="t " style="left:119px;top:586px;letter-spacing:-0.086px;">Thermal Insulation 1</div>
<svg style="left:98px;top:603px" width="16" height="16" viewBox="0 0 16 16"><path d="M3.500 3.800h10c3 0 3 11 0 11h-10c-3 0-3-11 0-11z" fill="#e2e4e6" stroke="#b9bcc0" stroke-width=".7"/><path d="M1.300 9.300h14.400c0 3-0.800 5.500-2.200 5.500h-10c-1.400 0-2.200-2.500-2.200-5.500z" fill="#1c5a9c"/></svg>
<div class="t " style="left:119px;top:604px;letter-spacing:-0.396px;">Heat Flux 1</div>
<svg style="left:98px;top:621px" width="16" height="16" viewBox="0 0 16 16"><path d="M3.500 3.800h10c3 0 3 11 0 11h-10c-3 0-3-11 0-11z" fill="#e2e4e6" stroke="#b9bcc0" stroke-width=".7"/><path d="M1.300 9.300h14.400c0 3-0.800 5.500-2.200 5.500h-10c-1.400 0-2.200-2.500-2.200-5.500z" fill="#1c5a9c"/></svg>
<div class="t " style="left:119px;top:622px;letter-spacing:-0.351px;">Heat Flux 2</div>
<svg style="left:64px;top:642px" width="6" height="10" viewBox="0 0 6 10"><path d="M0.500 0.800L5 5L0.500 9.200z" fill="#fff" stroke="#8a8a8a" stroke-width="1"/></svg>
<svg style="left:78px;top:639px" width="16" height="16" viewBox="0 0 16 16"><path d="M8.500 0.500v6M5.500 2l6 3M11.500 2l-6 3" stroke="#7aa" stroke-width=".9"/><path d="M8.500 7L3 11.500M8.500 7L14 11.500M8.500 7v5" stroke="#888" stroke-width=".9"/><rect x="0.500" y="11.500" width="3.500" height="3.500" fill="#3a9a3a"/><rect x="7" y="11.500" width="3" height="3.500" fill="#e06a2a"/><rect x="12.500" y="11.500" width="3.500" height="3.500" fill="#d0168c"/><path d="M5 15.500h7" stroke="#555"/><circle cx="8.500" cy="3.500" r="2" fill="none" stroke="#5b9bd5" stroke-width=".9"/></svg>
<div class="t " style="left:99px;top:640px;letter-spacing:0.071px;">Multiphysics</div>
<svg style="left:64px;top:660px" width="6" height="10" viewBox="0 0 6 10"><path d="M0.500 0.800L5 5L0.500 9.200z" fill="#fff" stroke="#8a8a8a" stroke-width="1"/></svg>
<svg style="left:78px;top:657px" width="16" height="16" viewBox="0 0 16 16"><path d="M8.500 1.500L15.500 15H1.500z" fill="#e8eaee" stroke="#4a5a70" stroke-width="1.100"/><path d="M5 8.500h7M3.300 12h10.500M8.500 1.500L5.500 15M8.500 1.500l3.500 13.500M5 8.500L12 15M12 8.500L5 15M5 8.500l-1.500 6.500M12 8.500l1.500 6.500" stroke="#4a5a70" stroke-width=".7" fill="none"/></svg>
<div class="t " style="left:99px;top:658px;letter-spacing:-0.442px;">Mesh 1</div>
<svg style="left:44px;top:678px" width="6" height="10" viewBox="0 0 6 10"><path d="M0.500 0.800L5 5L0.500 9.200z" fill="#fff" stroke="#8a8a8a" stroke-width="1"/></svg>
<svg style="left:58px;top:675px" width="16" height="16" viewBox="0 0 16 16"><path d="M0.500 7c2-3 3.500-3 5 0s3 3.500 4.500 1.500" fill="none" stroke="#1787a8" stroke-width="1.200"/><ellipse cx="9.500" cy="8" rx="2.300" ry="2.800" fill="none" stroke="#1787a8" stroke-width="1.100"/><ellipse cx="13.500" cy="8" rx="2.200" ry="2.600" fill="none" stroke="#1787a8" stroke-width="1.100"/></svg>
<div class="t " style="left:79px;top:676px;letter-spacing:-0.428px;">Study 1</div>
<svg style="left:43px;top:697px" width="7" height="7" viewBox="0 0 7 7"><path d="M6.500 0v6.500H0z" fill="#1a1a1a"/></svg>
<svg style="left:58px;top:693px" width="16" height="16" viewBox="0 0 16 16"><path d="M2.500 2.500h9v9" fill="none" stroke="#777"/><path d="M0.500 12L3 15h11" fill="none" stroke="#777"/><rect x="1" y="4.500" width="10" height="8" fill="#ddd" stroke="#777" stroke-width=".8"/><rect x="5.500" y="3.500" width="10" height="10" fill="#fff" stroke="#666"/><rect x="7.500" y="5.500" width="6" height="6" fill="#b0246f"/></svg>
<div class="t " style="left:79px;top:694px;letter-spacing:-0.516px;">Results</div>
<svg style="left:64px;top:714px" width="6" height="10" viewBox="0 0 6 10"><path d="M0.500 0.800L5 5L0.500 9.200z" fill="#fff" stroke="#8a8a8a" stroke-width="1"/></svg>
<svg style="left:78px;top:711px" width="16" height="16" viewBox="0 0 16 16"><rect x="2.5" y="0.5" width="1.200" height="1.200" fill="#b0246f"/><rect x="2.5" y="2.7" width="1.200" height="1.200" fill="#b0246f"/><rect x="2.5" y="4.9" width="1.200" height="1.200" fill="#b0246f"/><rect x="2.5" y="7.1" width="1.200" height="1.200" fill="#b0246f"/><rect x="2.5" y="9.3" width="1.200" height="1.200" fill="#b0246f"/><rect x="2.5" y="11.5" width="1.200" height="1.200" fill="#b0246f"/><rect x="2.5" y="13.7" width="1.200" height="1.200" fill="#b0246f"/><rect x="5.1" y="0.5" width="1.200" height="1.200" fill="#b0246f"/><rect x="5.1" y="2.7" width="1.200" height="1.200" fill="#b0246f"/><rect x="5.1" y="4.9" width="1.200" height="1.200" fill="#b0246f"/><rect x="5.1" y="7.1" width="1.200" height="1.200" fill="#b0246f"/><rect x="5.1" y="9.3" width="1.200" height="1.200" fill="#b0246f"/><rect x="5.1" y="11.5" width="1.200" height="1.200" fill="#b0246f"/><rect x="5.1" y="13.7" width="1.200" height="1.200" fill="#b0246f"/><rect x="7.7" y="0.5" width="1.200" height="1.200" fill="#b0246f"/><rect x="7.7" y="2.7" width="1.200" height="1.200" fill="#b0246f"/><rect x="7.7" y="4.9" width="1.200" height="1.200" fill="#b0246f"/><rect x="7.7" y="7.1" width="1.200" height="1.200" fill="#b0246f"/><rect x="7.7" y="9.3" width="1.200" height="1.200" fill="#b0246f"/><rect x="7.7" y="11.5" width="1.200" height="1.200" fill="#b0246f"/><rect x="7.7" y="13.7" width="1.200" height="1.200" fill="#b0246f"/><rect x="10.3" y="0.5" width="1.200" height="1.200" fill="#b0246f"/><rect x="10.3" y="2.7" width="1.200" height="1.200" fill="#b0246f"/><rect x="10.3" y="4.9" width="1.200" height="1.200" fill="#b0246f"/><rect x="10.3" y="7.1" width="1.200" height="1.200" fill="#b0246f"/><rect x="10.3" y="9.3" width="1.200" height="1.200" fill="#b0246f"/><rect x="10.3" y="11.5" width="1.200" height="1.200" fill="#b0246f"/><rect x="10.3" y="13.7" width="1.200" height="1.200" fill="#b0246f"/><rect x="12.9" y="0.5" width="1.200" height="1.200" fill="#b0246f"/><rect x="12.9" y="2.7" width="1.200" height="1.200" fill="#b0246f"/><rect x="12.9" y="4.9" width="1.200" height="1.200" fill="#b0246f"/><rect x="12.9" y="7.1" width="1.200" height="1.200" fill="#b0246f"/><rect x="12.9" y="9.3" width="1.200" height="1.200" fill="#b0246f"/><rect x="12.9" y="11.5" width="1.200" height="1.200" fill="#b0246f"/><rect x="12.9" y="13.7" width="1.200" height="1.200" fill="#b0246f"/></svg>
<div class="t " style="left:99px;top:712px;letter-spacing:-0.566px;">Data Sets</div>
<svg style="left:64px;top:732px" width="6" height="10" viewBox="0 0 6 10"><path d="M0.500 0.800L5 5L0.500 9.200z" fill="#fff" stroke="#8a8a8a" stroke-width="1"/></svg>
<svg style="left:78px;top:729px" width="16" height="16" viewBox="0 0 16 16"><path d="M8 13V2" stroke="#3a7fc4" stroke-width="1.100"/><path d="M8 0l-2 3.500h4z" fill="#3a7fc4"/><path d="M8 13L1.500 9" stroke="#3aa03a" stroke-width="1.100"/><path d="M0 8l3.600.4-1.800 2.700z" fill="#3aa03a"/><path d="M8 13l6.500-3" stroke="#e0204a" stroke-width="1.100"/><path d="M16.500 9l-3.600-.2 1.500 3z" fill="#e0204a"/></svg>
<div class="t " style="left:99px;top:730px;letter-spacing:-0.458px;">Views</div>
<svg style="left:64px;top:750px" width="6" height="10" viewBox="0 0 6 10"><path d="M0.500 0.800L5 5L0.500 9.200z" fill="#fff" stroke="#8a8a8a" stroke-width="1"/></svg>
<svg style="left:78px;top:747px" width="16" height="16" viewBox="0 0 16 16"><text x="0" y="7" font-family="Liberation Mono,monospace" font-size="7.500" font-weight="bold" fill="#b0246f" textLength="15" lengthAdjust="spacingAndGlyphs">8.85</text><text x="0" y="14" font-family="Liberation Mono,monospace" font-size="7.500" font-weight="bold" fill="#b0246f" textLength="15" lengthAdjust="spacingAndGlyphs">e-12</text></svg>
<div class="t " style="left:99px;top:748px;letter-spacing:-0.363px;">Derived Values</div>
<svg style="left:64px;top:768px" width="6" height="10" viewBox="0 0 6 10"><path d="M0.500 0.800L5 5L0.500 9.200z" fill="#fff" stroke="#8a8a8a" stroke-width="1"/></svg>
<svg style="left:78px;top:765px" width="16" height="16" viewBox="0 0 16 16"><rect x="1.500" y="1.500" width="13" height="13" fill="#fff" stroke="#b0246f" stroke-width="1.200"/><path d="M1.500 5.500h13M1.500 10h13M6 1.500v13M10.500 1.500v13" stroke="#b0246f" stroke-width="1.200"/></svg>
<div class="t " style="left:99px;top:766px;letter-spacing:-0.398px;">Tables</div>
<svg style="left:64px;top:786px" width="6" height="10" viewBox="0 0 6 10"><path d="M0.500 0.800L5 5L0.500 9.200z" fill="#fff" stroke="#8a8a8a" stroke-width="1"/></svg>
<svg style="left:78px;top:783px" width="16" height="16" viewBox="0 0 16 16"><path d="M0.500 1.500L11.500 1L15.500 4.500V15.500H4.500L0.500 12z" fill="#b0246f"/><path d="M0.500 1.500L4.500 5H15.500M4.500 5V15.500" stroke="#d98ab5" stroke-width=".8" fill="none"/></svg>
<div class="t " style="left:99px;top:784px;letter-spacing:-0.147px;">Electric Potential (ec)</div>
<div class="a" style="left:17px;top:800px;width:404px;height:18px;background:#cce8ff;outline:1px dotted #333;outline-offset:-1px"></div>
<svg style="left:64px;top:804px" width="6" height="10" viewBox="0 0 6 10"><path d="M0.500 0.800L5 5L0.500 9.200z" fill="#fff" stroke="#8a8a8a" stroke-width="1"/></svg>
<svg style="left:78px;top:801px" width="16" height="16" viewBox="0 0 16 16"><path d="M0.500 1.500L11.500 1L15.500 4.500V15.500H4.500L0.500 12z" fill="#b0246f"/><path d="M0.500 1.500L4.500 5H15.500M4.500 5V15.500" stroke="#d98ab5" stroke-width=".8" fill="none"/></svg>
<div class="t " style="left:99px;top:802px;letter-spacing:-0.019px;">Temperature (ht)</div>
<svg style="left:64px;top:822px" width="6" height="10" viewBox="0 0 6 10"><path d="M0.500 0.800L5 5L0.500 9.200z" fill="#fff" stroke="#8a8a8a" stroke-width="1"/></svg>
<svg style="left:78px;top:819px" width="16" height="16" viewBox="0 0 16 16"><path d="M0.500 1.500L11.500 1L15.500 4.500V15.500H4.500L0.500 12z" fill="#b0246f"/><path d="M0.500 1.500L4.500 5H15.500M4.500 5V15.500" stroke="#d98ab5" stroke-width=".8" fill="none"/></svg>
<div class="t " style="left:99px;top:820px;letter-spacing:-0.012px;">Isothermal Contours (ht)</div>
<svg style="left:64px;top:840px" width="6" height="10" viewBox="0 0 6 10"><path d="M0.500 0.800L5 5L0.500 9.200z" fill="#fff" stroke="#8a8a8a" stroke-width="1"/></svg>
<svg style="left:78px;top:837px" width="16" height="16" viewBox="0 0 16 16"><path d="M0.500 9c2-6 5-6 7.500-1s5 5 7.500-1" fill="none" stroke="#b0246f" stroke-width="1.300"/></svg>
<div class="t " style="left:99px;top:838px;letter-spacing:-0.174px;">Probe Plot Group 4</div>
<svg style="left:64px;top:858px" width="6" height="10" viewBox="0 0 6 10"><path d="M0.500 0.800L5 5L0.500 9.200z" fill="#fff" stroke="#8a8a8a" stroke-width="1"/></svg>
<svg style="left:78px;top:855px" width="16" height="16" viewBox="0 0 16 16"><rect x="1" y="1" width="14" height="14" fill="#b0246f"/></svg>
<div class="t " style="left:99px;top:856px;letter-spacing:-0.236px;">2D Plot Group 5</div>
<svg style="left:78px;top:873px" width="16" height="16" viewBox="0 0 16 16"><path d="M0.500 4L4 1h12v10l-3.500 3.500h-12z" fill="#fff" stroke="#b0246f" stroke-width="1.100"/><path d="M0.500 4h12L16 1M12.500 4v10.500" fill="none" stroke="#b0246f" stroke-width="1.100"/><rect x="3" y="7" width="7" height="5" fill="none" stroke="#b0246f" stroke-width="1.100"/><path d="M4.500 9.500h4" stroke="#b0246f" stroke-width="1.500"/></svg>
<div class="t " style="left:99px;top:874px;letter-spacing:-0.397px;">Export</div>
<svg style="left:78px;top:891px" width="16" height="16" viewBox="0 0 16 16"><rect x="0.500" y="1.500" width="15" height="13" fill="#fff" stroke="#666"/><path d="M8 1.500v13" stroke="#888" stroke-width=".8"/><path d="M2 4.500h4M2 7h4M2 9.500h3M10 4.500h4M10 7h4" stroke="#b0246f" stroke-width="1"/><path d="M5 5l9 8.500 1 2.500-3-1z" fill="#e59ac0" stroke="#b0246f" stroke-width=".8"/></svg>
<div class="t " style="left:99px;top:892px;letter-spacing:-0.360px;">Reports</div>
<div class="t " style="left:439px;top:156px;letter-spacing:-1.336px;font-size:21.5px;line-height:26px;height:26px;color:#2a57a5;-webkit-text-stroke:0.7px #fafbfe;">Settings</div>
<div class="t " style="left:438.5px;top:187px;letter-spacing:-0.619px;font-size:15px;line-height:16px;height:16px;color:#2a57a5;-webkit-text-stroke:0.45px #fafbfe;">3D Plot Group</div>
<svg style="left:932px;top:163px" width="24" height="12" viewBox="0 0 24 12"><path d="M1 3h7l-3.500 4z" fill="#c3cad6"/><path d="M16 0.500h5v5h1.500v1.500h-3.200v4h-1.300v-4h-3.200v-1.500h1.200z" fill="#c3cad6"/></svg>
<svg style="left:438px;top:208px" width="16" height="13" viewBox="0 0 16 13"><rect x="0.500" y="0.500" width="15" height="12" fill="#fff" stroke="#999"/><rect x="0.500" y="0.500" width="15" height="2" fill="#aaa"/><rect x="2" y="4" width="12" height="7" fill="#b0246f"/><circle cx="5.500" cy="7.500" r="2.200" fill="#fff"/><path d="M4.200 7.500h2.800" stroke="#b0246f" stroke-width="1"/></svg>
<div class="t " style="left:458.2px;top:207px;letter-spacing:-0.120px;">Plot</div>
<svg style="left:486px;top:208px" width="92" height="12" viewBox="0 0 92 12"><path d="M1 1v10" stroke="#b0246f" stroke-width="1.800"/><path d="M2.500 6L8 1.500V4.500H17v3H8v3z" fill="#b0246f"/><path d="M25.500 6L31 1.500V4.500H40v3H31v3z" fill="#b0246f"/><path d="M64.500 6L59 1.500V4.500H50v3h9v3z" fill="#b5b5b5"/><path d="M87 6L81.500 1.500V4.500H72.500v3h9v3z" fill="#b5b5b5"/><path d="M88.500 1v10" stroke="#b5b5b5" stroke-width="1.800"/></svg>
<div class="a" style="left:942px;top:227px;width:17px;height:366px;background:#f0f0f0"></div>
<div class="a" style="left:942px;top:244px;width:17px;height:200px;background:#cdcdcd"></div>
<svg style="left:945px;top:230px" width="12" height="8" viewBox="0 0 12 8"><path d="M1.500 6L5.500 2L9.500 6" fill="none" stroke="#8a8a8a" stroke-width="1.100"/></svg>
<svg style="left:945px;top:580px" width="12" height="8" viewBox="0 0 12 8"><path d="M1.500 2L5.500 6L9.500 2" fill="none" stroke="#6a6a6a" stroke-width="1.100"/></svg>
<div class="t " style="left:437px;top:241px;letter-spacing:-0.332px;">Label:</div>
<div class="a" style="left:478px;top:238px;width:430px;height:19px;background:#fff;border:1px solid #c9c9c9"></div>
<div class="t " style="left:481.2px;top:240px;letter-spacing:-0.006px;">Temperature (ht)</div>
<div class="a" style="left:916px;top:236px;width:21px;height:23px;background:linear-gradient(#f6f6f6,#eaeaea);border:1px solid #b5b5b5;border-radius:3px"></div>
<svg style="left:919px;top:240px" width="16" height="15" viewBox="0 0 16 15"><rect x="2.500" y="0.500" width="12" height="11" fill="#fff" stroke="#666"/><rect x="2.500" y="0.500" width="12" height="2.500" fill="#999"/><path d="M5 6h7M5 8.500h7" stroke="#3c8f2f" stroke-width="1.200"/><path d="M0 14l4.500-1-3.500-3.500z" fill="#3c8f2f"/></svg>
<div class="a" style="left:432px;top:268px;width:510px;height:25px;background:#dde6f4"></div>
<svg style="left:437px;top:277px" width="10" height="7" viewBox="0 0 10 7"><path d="M0.500 0.500h8l-4 5z" fill="#3a3a3a"/></svg>
<div class="t " style="left:458.2px;top:273px;letter-spacing:-0.265px;font-size:13px;line-height:16px;height:16px;">Data</div>
<div class="t " style="left:437px;top:307px;letter-spacing:-0.358px;">Data set:</div>
<div class="a" style="left:789px;top:303px;width:119px;height:20px;background:linear-gradient(#f4f4f4,#e9e9e9);border:1px solid #a9a9a9;border-radius:3px"></div>
<div class="a" style="left:801px;top:306px;width:87px;height:14px;overflow:hidden"><div class="t" style="left:0;top:0;">Study 1/Parametric Solutions 1</div></div>
<svg style="left:895px;top:311px" width="8" height="5" viewBox="0 0 8 5"><path d="M0 0h7l-3.500 4z" fill="#000"/></svg>
<div class="a" style="left:916px;top:302px;width:21px;height:23px;background:linear-gradient(#f6f6f6,#eaeaea);border:1px solid #b5b5b5;border-radius:3px"></div>
<svg style="left:919px;top:306px" width="16" height="15" viewBox="0 0 16 15"><path d="M1 1.500h6M1 4.500h4M2.500 7.500h4M2.500 10.500h4M1 13.500h5" stroke="#555" stroke-width="1.100"/><path d="M8 13.500h5.500v-8" fill="none" stroke="#3c8f2f" stroke-width="1.400"/><path d="M13.500 1.500l-3 4.500h6z" fill="#3c8f2f"/></svg>
<div class="t " style="left:437px;top:335px;letter-spacing:-0.199px;">Parameter value (LL_rod_diameter_Parameter_part_ipt (mm)):</div>
<div class="a" style="left:789px;top:332px;width:148px;height:19px;background:linear-gradient(#f4f4f4,#e9e9e9);border:1px solid #a9a9a9;border-radius:3px"></div>
<div class="t " style="left:801px;top:334px;letter-spacing:-0.423px;">20</div>
<svg style="left:924px;top:340px" width="8" height="5" viewBox="0 0 8 5"><path d="M0 0h7l-3.500 4z" fill="#000"/></svg>
<div class="t " style="left:437px;top:361px;letter-spacing:-0.148px;">Parameter value (LL_connector_width_Parameter_part_ipt (mm)):</div>
<div class="a" style="left:789px;top:357px;width:148px;height:20px;background:linear-gradient(#f4f4f4,#e9e9e9);border:1px solid #a9a9a9;border-radius:3px"></div>
<div class="t " style="left:801px;top:360px;letter-spacing:-0.423px;">90</div>
<svg style="left:924px;top:365px" width="8" height="5" viewBox="0 0 8 5"><path d="M0 0h7l-3.500 4z" fill="#000"/></svg>
<div class="a" style="left:432px;top:388px;width:510px;height:25px;background:#dde6f4"></div>
<svg style="left:438px;top:394px" width="7" height="12" viewBox="0 0 7 12"><path d="M0.800 1L5.500 6L0.800 11z" fill="#fff" stroke="#8a8a8a"/></svg>
<div class="t " style="left:458.2px;top:393px;letter-spacing:-0.215px;font-size:13px;line-height:16px;height:16px;">Title</div>
<div class="a" style="left:432px;top:415px;width:510px;height:25px;background:#dde6f4"></div>
<svg style="left:437px;top:424px" width="10" height="7" viewBox="0 0 10 7"><path d="M0.500 0.500h8l-4 5z" fill="#3a3a3a"/></svg>
<div class="t " style="left:458.2px;top:420px;letter-spacing:-0.122px;font-size:13px;line-height:16px;height:16px;">Plot Settings</div>
<div class="t " style="left:437px;top:454px;letter-spacing:-0.345px;">View:</div>
<div class="a" style="left:475px;top:450px;width:433px;height:20px;background:linear-gradient(#f4f4f4,#e9e9e9);border:1px solid #a9a9a9;border-radius:3px"></div>
<div class="t " style="left:487px;top:453px;letter-spacing:0.183px;">Automatic</div>
<svg style="left:895px;top:458px" width="8" height="5" viewBox="0 0 8 5"><path d="M0 0h7l-3.500 4z" fill="#000"/></svg>
<div class="a" style="left:916px;top:449px;width:21px;height:23px;background:linear-gradient(#f6f6f6,#eaeaea);border:1px solid #b5b5b5;border-radius:3px"></div>
<svg style="left:919px;top:453px" width="16" height="15" viewBox="0 0 16 15"><path d="M1 1.500h6M1 4.500h4M2.500 7.500h4M2.500 10.500h4M1 13.500h5" stroke="#555" stroke-width="1.100"/><path d="M8 13.500h5.500v-8" fill="none" stroke="#3c8f2f" stroke-width="1.400"/><path d="M13.500 1.500l-3 4.500h6z" fill="#3c8f2f"/></svg>
<div class="a" style="left:438px;top:479px;width:13px;height:13px;background:#fff;border:1px solid #333"></div>
<div class="t " style="left:457.3px;top:478px;letter-spacing:-0.052px;">Show hidden entities</div>
<div class="a" style="left:438px;top:500px;width:13px;height:13px;background:#fff;border:1px solid #333"></div>
<div class="t " style="left:457.3px;top:499px;letter-spacing:0.011px;">Propagate hiding to lower dimensions</div>
<div class="a" style="left:438px;top:532px;width:498px;height:61px;border:1px solid #dfe3ea;border-radius:3px 3px 0 0;border-bottom:none"></div>
<div class="a" style="left:447px;top:524px;width:127px;height:16px;background:#fafbfe"></div>
<div class="a" style="left:452px;top:525px;width:13px;height:13px;background:#fff;border:1px solid #333"></div>
<svg style="left:452px;top:525px" width="13" height="13" viewBox="0 0 13 13"><path d="M2.800 6.500L5.300 9.500L10.200 3" fill="none" stroke="#000" stroke-width="1.500"/></svg>
<div class="t " style="left:471.4px;top:524px;letter-spacing:-0.228px;">Plot data set edges</div>
<div class="t " style="left:448.3px;top:549px;letter-spacing:-0.085px;">Color:</div>
<div class="a" style="left:494px;top:545px;width:432px;height:20px;background:linear-gradient(#f4f4f4,#e9e9e9);border:1px solid #a9a9a9;border-radius:3px"></div>
<div class="t " style="left:506px;top:548px;letter-spacing:-0.501px;">Gray</div>
<svg style="left:913px;top:553px" width="8" height="5" viewBox="0 0 8 5"><path d="M0 0h7l-3.500 4z" fill="#000"/></svg>
<div class="t " style="left:448.3px;top:575px;letter-spacing:-0.467px;">Frame:</div>
<div class="a" style="left:494px;top:571px;width:432px;height:20px;background:linear-gradient(#f4f4f4,#e9e9e9);border:1px solid #a9a9a9;border-radius:3px"></div>
<div class="t " style="left:506px;top:574px;letter-spacing:-0.171px;">Material  (X, Y, Z)</div>
<svg style="left:913px;top:579px" width="8" height="5" viewBox="0 0 8 5"><path d="M0 0h7l-3.500 4z" fill="#000"/></svg>
<div class="a" style="left:432px;top:593px;width:527px;height:1px;background:#d2d2d2"></div>
<div class="a" style="left:431px;top:594px;width:530px;height:5px;background:#f9fafe"></div>
<div class="t " style="left:439.6px;top:606px;letter-spacing:-1.047px;font-size:21.5px;line-height:26px;height:26px;color:#2a57a5;-webkit-text-stroke:0.7px #fafbfe;">Plot 2</div>
<svg style="left:917px;top:613px" width="40" height="12" viewBox="0 0 40 12"><path d="M0.500 2h9l-4.500 5z" fill="#c3cad6"/><path d="M17.500 0.500h5v5h1.500v1.500h-3.200v4h-1.300v-4h-3.200v-1.500h1.200z" fill="#c3cad6"/><path d="M30 0.500l9 9M39 0.500l-9 9" stroke="#c3cad6" stroke-width="1.100"/></svg>
<svg style="left:438.7px;top:635.3px" width="16" height="16" viewBox="0 0 16 16"><circle cx="6" cy="6" r="5" fill="#fff" stroke="#2d4f80" stroke-width="1.500"/><path d="M9.800 9.800L14 14" stroke="#2d4f80" stroke-width="2.200"/><path d="M3.500 6h5M6 3.500v5" stroke="#2d4f80" stroke-width="1.200"/></svg>
<svg style="left:462.3px;top:635.3px" width="16" height="16" viewBox="0 0 16 16"><circle cx="6" cy="6" r="5" fill="#fff" stroke="#2d4f80" stroke-width="1.500"/><path d="M9.800 9.800L14 14" stroke="#2d4f80" stroke-width="2.200"/><path d="M3.500 6h5" stroke="#2d4f80" stroke-width="1.200"/></svg>
<svg style="left:485.5px;top:635.3px" width="18" height="16" viewBox="0 0 18 16"><rect x="0.500" y="6" width="8" height="7" fill="none" stroke="#2d4f80" stroke-dasharray="2 1"/><circle cx="9.500" cy="6" r="4.800" fill="#fff" fill-opacity=".8" stroke="#2d4f80" stroke-width="1.500"/><path d="M13 9.800L16.500 14" stroke="#2d4f80" stroke-width="2.200"/><path d="M7 6h5M9.500 3.500v5" stroke="#2d4f80" stroke-width="1.200"/></svg>
<svg style="left:510px;top:634px" width="16" height="16" viewBox="0 0 16 16"><rect x="0.500" y="0.500" width="14" height="14" fill="#fff" stroke="#666"/><path d="M5.500 7.500h4M7.500 5.500v4" stroke="#444" stroke-width="1.100"/><path d="M7.500 1.500l-2 2.500h4zM7.500 13.500l-2-2.500h4zM1.500 7.500l2.500-2v4zM13.500 7.500l-2.500-2v4z" fill="#4a90d9"/></svg>
<div class="a" style="left:536px;top:634px;width:1px;height:16px;background:#c8c8c8"></div>
<svg style="left:549px;top:633px" width="18" height="18" viewBox="0 0 18 18"><rect x="0.750" y="0.750" width="16.500" height="16.500" rx="2.500" fill="#cfe3fa" stroke="#3b6cb5" stroke-width="1.500"/><rect x="3" y="3" width="12" height="12" fill="#fff" stroke="#555" stroke-width="1"/><rect x="3" y="2.500" width="12" height="1.500" fill="#555"/><rect x="4.8" y="5.2" width="2.200" height="2.200" fill="#4a7db8"/><rect x="4.8" y="8.3" width="2.200" height="2.200" fill="#4a7db8"/><rect x="4.8" y="11.4" width="2.200" height="2.200" fill="#4a7db8"/><rect x="8.0" y="5.2" width="2.200" height="2.200" fill="#4a7db8"/><rect x="8.0" y="8.3" width="2.200" height="2.200" fill="#4a7db8"/><rect x="8.0" y="11.4" width="2.200" height="2.200" fill="#4a7db8"/><rect x="11.2" y="5.2" width="2.200" height="2.200" fill="#4a7db8"/><rect x="11.2" y="8.3" width="2.200" height="2.200" fill="#4a7db8"/><rect x="11.2" y="11.4" width="2.200" height="2.200" fill="#4a7db8"/></svg>
<svg style="left:573px;top:633px" width="18" height="18" viewBox="0 0 18 18"><rect x="0.750" y="0.750" width="16.500" height="16.500" rx="2.500" fill="#cfe3fa" stroke="#3b6cb5" stroke-width="1.500"/><defs><linearGradient id="lgleg" x1="0" y1="0" x2="0" y2="1"><stop offset="0" stop-color="#5b8fd0"/><stop offset=".5" stop-color="#f2a23a"/><stop offset="1" stop-color="#d82a2a"/></linearGradient></defs><rect x="3" y="3" width="12" height="12" fill="#cfe3fa" stroke="#555"/><rect x="3" y="2.500" width="12" height="1.500" fill="#555"/><rect x="11" y="4.500" width="2.500" height="9.500" fill="url(#lgleg)"/></svg>
<div class="a" style="left:600px;top:634px;width:1px;height:16px;background:#c8c8c8"></div>
<svg style="left:616.5px;top:635.5px" width="12" height="14" viewBox="0 0 12 14"><path d="M2.500 6V4.500a3 3 0 0 1 6 0V6" fill="none" stroke="#4a7db8" stroke-width="1.600"/><rect x="0" y="5.500" width="11" height="7" fill="#4a7db8"/></svg>
<div class="a" style="left:640px;top:634px;width:1px;height:16px;background:#c8c8c8"></div>
<svg style="left:654px;top:636px" width="16" height="12" viewBox="0 0 16 12"><path d="M0 2.500h3.500l1.500-2h6l1.500 2H16V12H0z" fill="#4a7db8"/><circle cx="8" cy="7" r="3.400" fill="#fff"/><circle cx="8" cy="7" r="2" fill="#4a7db8"/></svg>
<svg style="left:679px;top:634px" width="14" height="16" viewBox="0 0 14 16"><rect x="2.500" y="0.500" width="9" height="5" fill="#fff" stroke="#4a7db8"/><rect x="0" y="5" width="14" height="7" rx="1" fill="#4a7db8"/><rect x="2.500" y="10.500" width="9" height="5" fill="#fff" stroke="#4a7db8"/><rect x="9.500" y="7" width="1.200" height="1.200" fill="#fff"/><rect x="11.500" y="7" width="1.200" height="1.200" fill="#fff"/></svg>
<div class="a" style="left:432px;top:655px;width:527px;height:388px;background:#fff"></div>
<svg style="left:935px;top:662px" width="19" height="17" viewBox="0 0 19 17"><defs><linearGradient id="lgc935" x1="0" y1="0" x2="1" y2="1"><stop offset="0" stop-color="#3a7ae0"/><stop offset=".5" stop-color="#35b0f0"/><stop offset="1" stop-color="#1030a8"/></linearGradient></defs><path d="M9 0.500l8.500 3-1.500 11-9 2.500-6.500-5 1-8z" fill="#e9e9ee" opacity=".75"/><rect x="2.500" y="3" width="14" height="11" rx="2.500" fill="#1a2fa8"/><rect x="4.500" y="4.500" width="11" height="8" rx="1" fill="url(#lgc935)"/><path d="M5 5l6.500 3.500L5 12z" fill="#f5e63c"/><path d="M5.500 9.500h10" stroke="#7fd0ff" stroke-width="1" opacity=".6"/></svg>
<div class="t " style="left:515.8px;top:669.5px;font-family:'DejaVu Sans',sans-serif;letter-spacing:0.080px;font-size:12px;">Table Surface: Temperature (degC), Domain Probe 1</div>
<svg style="left:0px;top:0px" width="1920" height="1080" viewBox="0 0 1920 1080"><rect x="591.2" y="708.0" width="284.3" height="285.7" fill="#ff0000"/><polygon points="612.8,708.3 635.6,745.8 655.0,777.8 674.4,807.0 691.1,827.8 710.6,852.8 731.4,880.6 752.2,900.0 774.4,916.1 802.2,937.5 830.0,959.7 857.8,982.0 872.2,993.6 875.5,993.7 875.5,708.0" fill="#00ff00"/><rect x="514.5" y="701.5" width="438.0" height="299.0" fill="none" stroke="#555" stroke-width="1"/><path d="M520.5 701.5v6M520.5 1000.5v-6M591.5 701.5v6M591.5 1000.5v-6M662.5 701.5v6M662.5 1000.5v-6M733.5 701.5v6M733.5 1000.5v-6M804.5 701.5v6M804.5 1000.5v-6M876.5 701.5v6M876.5 1000.5v-6M947.5 701.5v6M947.5 1000.5v-6M514.5 994.5h6M952.5 994.5h-6M514.5 975.5h6M952.5 975.5h-6M514.5 956.5h6M952.5 956.5h-6M514.5 937.5h6M952.5 937.5h-6M514.5 918.5h6M952.5 918.5h-6M514.5 898.5h6M952.5 898.5h-6M514.5 879.5h6M952.5 879.5h-6M514.5 860.5h6M952.5 860.5h-6M514.5 841.5h6M952.5 841.5h-6M514.5 822.5h6M952.5 822.5h-6M514.5 803.5h6M952.5 803.5h-6M514.5 784.5h6M952.5 784.5h-6M514.5 765.5h6M952.5 765.5h-6M514.5 746.5h6M952.5 746.5h-6M514.5 727.5h6M952.5 727.5h-6M514.5 708.5h6M952.5 708.5h-6" stroke="#444" stroke-width="1" fill="none"/></svg>
<div class="t" style="font-family:'DejaVu Sans',sans-serif;left:480px;width:29.500px;text-align:right;top:987.0px;font-size:12px">60</div>
<div class="t" style="font-family:'DejaVu Sans',sans-serif;left:480px;width:29.500px;text-align:right;top:967.9px;font-size:12px">62</div>
<div class="t" style="font-family:'DejaVu Sans',sans-serif;left:480px;width:29.500px;text-align:right;top:948.9px;font-size:12px">64</div>
<div class="t" style="font-family:'DejaVu Sans',sans-serif;left:480px;width:29.500px;text-align:right;top:929.9px;font-size:12px">66</div>
<div class="t" style="font-family:'DejaVu Sans',sans-serif;left:480px;width:29.500px;text-align:right;top:910.8px;font-size:12px">68</div>
<div class="t" style="font-family:'DejaVu Sans',sans-serif;left:480px;width:29.500px;text-align:right;top:891.8px;font-size:12px">70</div>
<div class="t" style="font-family:'DejaVu Sans',sans-serif;left:480px;width:29.500px;text-align:right;top:872.7px;font-size:12px">72</div>
<div class="t" style="font-family:'DejaVu Sans',sans-serif;left:480px;width:29.500px;text-align:right;top:853.7px;font-size:12px">74</div>
<div class="t" style="font-family:'DejaVu Sans',sans-serif;left:480px;width:29.500px;text-align:right;top:834.6px;font-size:12px">76</div>
<div class="t" style="font-family:'DejaVu Sans',sans-serif;left:480px;width:29.500px;text-align:right;top:815.6px;font-size:12px">78</div>
<div class="t" style="font-family:'DejaVu Sans',sans-serif;left:480px;width:29.500px;text-align:right;top:796.5px;font-size:12px">80</div>
<div class="t" style="font-family:'DejaVu Sans',sans-serif;left:480px;width:29.500px;text-align:right;top:777.5px;font-size:12px">82</div>
<div class="t" style="font-family:'DejaVu Sans',sans-serif;left:480px;width:29.500px;text-align:right;top:758.4px;font-size:12px">84</div>
<div class="t" style="font-family:'DejaVu Sans',sans-serif;left:480px;width:29.500px;text-align:right;top:739.4px;font-size:12px">86</div>
<div class="t" style="font-family:'DejaVu Sans',sans-serif;left:480px;width:29.500px;text-align:right;top:720.3px;font-size:12px">88</div>
<div class="t" style="font-family:'DejaVu Sans',sans-serif;left:480px;width:29.500px;text-align:right;top:701.3px;font-size:12px">90</div>
<div class="t" style="font-family:'DejaVu Sans',sans-serif;left:500.1px;width:40px;text-align:center;top:1007.5px;font-size:12px">15</div>
<div class="t" style="font-family:'DejaVu Sans',sans-serif;left:571.2px;width:40px;text-align:center;top:1007.5px;font-size:12px">16</div>
<div class="t" style="font-family:'DejaVu Sans',sans-serif;left:642.3px;width:40px;text-align:center;top:1007.5px;font-size:12px">17</div>
<div class="t" style="font-family:'DejaVu Sans',sans-serif;left:713.4px;width:40px;text-align:center;top:1007.5px;font-size:12px">18</div>
<div class="t" style="font-family:'DejaVu Sans',sans-serif;left:784.4px;width:40px;text-align:center;top:1007.5px;font-size:12px">19</div>
<div class="t" style="font-family:'DejaVu Sans',sans-serif;left:855.5px;width:40px;text-align:center;top:1007.5px;font-size:12px">20</div>
<div class="t " style="left:568.4px;top:1023.5px;font-family:'DejaVu Sans',sans-serif;letter-spacing:0.060px;font-size:12px;">Rod diameter (rod_diameter.Parameter_part.ipt) (mm)</div>
<div class="t" style="font-family:'DejaVu Sans',sans-serif;letter-spacing:0.049px;left:434px;top:1000.500px;transform-origin:0 0;transform:rotate(-90deg);font-size:12px">Busbar width (connector_width.Parameter_part.ip</div>
<div class="t" style="font-family:'DejaVu Sans',sans-serif;left:450px;top:873.500px;transform-origin:0 0;transform:rotate(-90deg);font-size:12px">t) (mm)</div>
<div class="t" style="font-family:'DejaVu Sans',sans-serif;left:748.4px;top:812.5px;font-size:12px"><span style="font-style:italic">T</span><span style="font-size:9px;position:relative;top:3px;letter-spacing:.3px"> max</span><span style="font-size:14px;letter-spacing:.4px">  &lt; </span><span style="letter-spacing:.4px">90</span><span style="position:relative;top:-1px;font-size:14px;letter-spacing:.5px"> °</span><span> C</span></div>
<div class="t" style="font-family:'DejaVu Sans',sans-serif;left:648px;top:908.5px;font-size:12px"><span style="font-style:italic">T</span><span style="font-size:9px;position:relative;top:3px;letter-spacing:.3px"> max</span><span style="font-size:14px;letter-spacing:.4px">  &gt; </span><span style="letter-spacing:.4px">90</span><span style="position:relative;top:-1px;font-size:14px;letter-spacing:.5px"> °</span><span> C</span></div>
<div class="t " style="left:973px;top:156px;letter-spacing:-1.442px;font-size:21.5px;line-height:26px;height:26px;color:#2a57a5;-webkit-text-stroke:0.7px #fafbfe;">Graphics</div>
<svg style="left:1881px;top:163px" width="24" height="12" viewBox="0 0 24 12"><path d="M1 3h7l-3.500 4z" fill="#c3cad6"/><path d="M16 0.500h5v5h1.500v1.500h-3.200v4h-1.300v-4h-3.200v-1.500h1.200z" fill="#c3cad6"/></svg>
<div class="a" style="left:966px;top:205px;width:942px;height:655px;background:linear-gradient(#fbfcff,#dbeafc)"></div>
<svg style="left:973px;top:185.3px" width="16" height="16" viewBox="0 0 16 16"><circle cx="6" cy="6" r="5" fill="#fff" stroke="#2d4f80" stroke-width="1.500"/><path d="M9.800 9.800L14 14" stroke="#2d4f80" stroke-width="2.200"/><path d="M3.500 6h5M6 3.500v5" stroke="#2d4f80" stroke-width="1.200"/></svg>
<svg style="left:996.7px;top:185.3px" width="16" height="16" viewBox="0 0 16 16"><circle cx="6" cy="6" r="5" fill="#fff" stroke="#2d4f80" stroke-width="1.500"/><path d="M9.800 9.800L14 14" stroke="#2d4f80" stroke-width="2.200"/><path d="M3.500 6h5" stroke="#2d4f80" stroke-width="1.200"/></svg>
<svg style="left:1019.5px;top:185.3px" width="18" height="16" viewBox="0 0 18 16"><rect x="0.500" y="6" width="8" height="7" fill="none" stroke="#2d4f80" stroke-dasharray="2 1"/><circle cx="9.500" cy="6" r="4.800" fill="#fff" fill-opacity=".8" stroke="#2d4f80" stroke-width="1.500"/><path d="M13 9.800L16.500 14" stroke="#2d4f80" stroke-width="2.200"/><path d="M7 6h5M9.500 3.500v5" stroke="#2d4f80" stroke-width="1.200"/></svg>
<svg style="left:1044.2px;top:184px" width="16" height="16" viewBox="0 0 16 16"><rect x="0.500" y="0.500" width="14" height="14" fill="#fff" stroke="#666"/><path d="M5.500 7.500h4M7.500 5.500v4" stroke="#444" stroke-width="1.100"/><path d="M7.500 1.500l-2 2.500h4zM7.500 13.500l-2-2.500h4zM1.500 7.500l2.500-2v4zM13.500 7.500l-2.500-2v4z" fill="#4a90d9"/></svg>
<div class="a" style="left:1070px;top:184px;width:1px;height:16px;background:#c8c8c8"></div>
<svg style="left:1083.5px;top:185px" width="17" height="16" viewBox="0 0 17 16"><path d="M8 13V2" stroke="#3a7fc4" stroke-width="1.100"/><path d="M8 0l-2 3.500h4z" fill="#3a7fc4"/><path d="M8 13L2 9" stroke="#3aa03a" stroke-width="1.100"/><path d="M0.500 7.800l3.600.6-1.900 2.600z" fill="#3aa03a"/><path d="M8 13l6.500-3.500" stroke="#e0204a" stroke-width="1.100"/><path d="M16.500 8.500l-3.700 0 1.600 3z" fill="#e0204a"/></svg>
<svg style="left:1108px;top:190px" width="8" height="5" viewBox="0 0 8 5"><path d="M0 0h7l-3.500 4z" fill="#000"/></svg>
<svg style="left:1127.5px;top:184px" width="17" height="17" viewBox="0 0 17 17"><path d="M2.500 15V2" stroke="#3aa03a" stroke-width="1.100"/><path d="M2.500 0l-2 3.500h4z" fill="#3aa03a"/><path d="M2.500 14.500H14" stroke="#2d5b96" stroke-width="1.100"/><path d="M16 14.500l-3.500-2v4z" fill="#2d5b96"/><text x="5" y="9.500" font-family="Liberation Sans,sans-serif" font-size="9.500" fill="#2d4f80">xy</text></svg>
<svg style="left:1151.5px;top:184px" width="17" height="17" viewBox="0 0 17 17"><path d="M2.500 15V2" stroke="#2d5b96" stroke-width="1.100"/><path d="M2.500 0l-2 3.500h4z" fill="#2d5b96"/><path d="M2.500 14.500H14" stroke="#3aa03a" stroke-width="1.100"/><path d="M16 14.500l-3.500-2v4z" fill="#3aa03a"/><text x="5" y="9.500" font-family="Liberation Sans,sans-serif" font-size="9.500" fill="#2d4f80">yz</text></svg>
<svg style="left:1175.7px;top:184px" width="17" height="17" viewBox="0 0 17 17"><path d="M2.500 15V2" stroke="#2d5b96" stroke-width="1.100"/><path d="M2.500 0l-2 3.500h4z" fill="#2d5b96"/><path d="M2.500 14.500H14" stroke="#d02020" stroke-width="1.100"/><path d="M16 14.500l-3.500-2v4z" fill="#d02020"/><text x="5" y="9.500" font-family="Liberation Sans,sans-serif" font-size="9.500" fill="#2d4f80">xz</text></svg>
<svg style="left:1200.5px;top:185px" width="14" height="15" viewBox="0 0 14 15"><path d="M11.500 5.500A5.500 5.500 0 1 1 6 2.200" fill="none" stroke="#4a86c8" stroke-width="1.400"/><path d="M5.500 0l4 2.300-4 2.600z" fill="#4a86c8"/></svg>
<svg style="left:1224px;top:185px" width="14" height="15" viewBox="0 0 14 15"><path d="M2.500 5.500A5.500 5.500 0 1 0 8 2.200" fill="none" stroke="#4a86c8" stroke-width="1.400"/><path d="M8.500 0l-4 2.300 4 2.600z" fill="#4a86c8"/></svg>
<svg style="left:1247.5px;top:186px" width="15" height="12" viewBox="0 0 15 12"><rect x="0" y="0" width="6" height="11" rx="1" fill="#4a7db8"/><rect x="6" y="3" width="3" height="6" fill="#4a7db8"/><path d="M9 4l5.500-2.500v9L9 8z" fill="#4a7db8"/><path d="M11 4.500v3" stroke="#dce8f6" stroke-width="1"/></svg>
<svg style="left:1270px;top:183px" width="18" height="18" viewBox="0 0 18 18"><rect x="0.750" y="0.750" width="16.500" height="16.500" rx="2.500" fill="#cfe3fa" stroke="#3b6cb5" stroke-width="1.500"/><rect x="3" y="3" width="12" height="12" fill="#fff" stroke="#555" stroke-width="1"/><rect x="3" y="2.500" width="12" height="1.500" fill="#555"/><rect x="4.8" y="5.2" width="2.200" height="2.200" fill="#4a7db8"/><rect x="4.8" y="8.3" width="2.200" height="2.200" fill="#4a7db8"/><rect x="4.8" y="11.4" width="2.200" height="2.200" fill="#4a7db8"/><rect x="8.0" y="5.2" width="2.200" height="2.200" fill="#4a7db8"/><rect x="8.0" y="8.3" width="2.200" height="2.200" fill="#4a7db8"/><rect x="8.0" y="11.4" width="2.200" height="2.200" fill="#4a7db8"/><rect x="11.2" y="5.2" width="2.200" height="2.200" fill="#4a7db8"/><rect x="11.2" y="8.3" width="2.200" height="2.200" fill="#4a7db8"/><rect x="11.2" y="11.4" width="2.200" height="2.200" fill="#4a7db8"/></svg>
<svg style="left:1294px;top:183px" width="18" height="18" viewBox="0 0 18 18"><rect x="0.750" y="0.750" width="16.500" height="16.500" rx="2.500" fill="#cfe3fa" stroke="#3b6cb5" stroke-width="1.500"/><rect x="3" y="3" width="12" height="12" fill="#cfe3fa" stroke="#555"/><rect x="3" y="2.500" width="12" height="1.500" fill="#555"/><path d="M9 12V5.500" stroke="#2d5b96"/><path d="M9 4.500l-1.500 2h3z" fill="#2d5b96"/><path d="M9 12L5.500 9.500" stroke="#3aa03a"/><path d="M9 12l4-2.500" stroke="#e0204a"/><circle cx="5.300" cy="9.300" r="1" fill="#3aa03a"/><circle cx="13" cy="9.300" r="1" fill="#e0204a"/></svg>
<svg style="left:1318px;top:183px" width="18" height="18" viewBox="0 0 18 18"><rect x="0.750" y="0.750" width="16.500" height="16.500" rx="2.500" fill="#cfe3fa" stroke="#3b6cb5" stroke-width="1.500"/><defs><linearGradient id="lgleg2" x1="0" y1="0" x2="0" y2="1"><stop offset="0" stop-color="#5b8fd0"/><stop offset=".5" stop-color="#f2a23a"/><stop offset="1" stop-color="#d82a2a"/></linearGradient></defs><rect x="3" y="3" width="12" height="12" fill="#cfe3fa" stroke="#555"/><rect x="3" y="2.500" width="12" height="1.500" fill="#555"/><rect x="11" y="4.500" width="2.500" height="9.500" fill="url(#lgleg2)"/></svg>
<div class="a" style="left:1345px;top:184px;width:1px;height:16px;background:#c8c8c8"></div>
<svg style="left:1357.5px;top:183px" width="19" height="18" viewBox="0 0 19 18"><rect x="0.750" y="0.750" width="17.500" height="16.500" rx="2.500" fill="#bcd8f5" stroke="#3b6cb5" stroke-width="1.500"/><path d="M17.500 1.500L3 9l14.500 7.500" fill="#d6e8fb" stroke="#666" stroke-width=".8"/><path d="M3 9l9-4.500v9z" fill="#4a7db8"/><path d="M12 6a4 4 0 0 1 0 6" fill="none" stroke="#4a7db8"/></svg>
<svg style="left:1384px;top:186px" width="15" height="13" viewBox="0 0 15 13"><rect x="0.500" y="0.500" width="10" height="8" fill="#e6eef8" stroke="#7fa3d1"/><rect x="3.500" y="3.500" width="10.500" height="8.500" fill="#dbe6f4" fill-opacity=".8" stroke="#6d96c9"/><path d="M0.500 8.500l3 3.500" stroke="#7fa3d1"/></svg>
<div class="a" style="left:1409px;top:184px;width:1px;height:16px;background:#c8c8c8"></div>
<svg style="left:1422.5px;top:186px" width="16" height="12" viewBox="0 0 16 12"><path d="M0 2.500h3.500l1.500-2h6l1.500 2H16V12H0z" fill="#4a7db8"/><circle cx="8" cy="7" r="3.400" fill="#fff"/><circle cx="8" cy="7" r="2" fill="#4a7db8"/></svg>
<svg style="left:1448px;top:184px" width="14" height="16" viewBox="0 0 14 16"><rect x="2.500" y="0.500" width="9" height="5" fill="#fff" stroke="#4a7db8"/><rect x="0" y="5" width="14" height="7" rx="1" fill="#4a7db8"/><rect x="2.500" y="10.500" width="9" height="5" fill="#fff" stroke="#4a7db8"/><rect x="9.500" y="7" width="1.200" height="1.200" fill="#fff"/><rect x="11.500" y="7" width="1.200" height="1.200" fill="#fff"/></svg>
<div class="t " style="left:981.2px;top:220px;font-family:'DejaVu Sans',sans-serif;letter-spacing:0.055px;font-size:12px;">LL_rod_diameter_Parameter_part_ipt=20, LL_connector_width_Parameter_part_ipt=90</div>
<div class="t " style="left:1515px;top:220px;font-family:'DejaVu Sans',sans-serif;letter-spacing:0.090px;font-size:12px;">Surface: Temperature (degC)</div>
<svg style="left:1884px;top:211px" width="19" height="17" viewBox="0 0 19 17"><defs><linearGradient id="lgc1884" x1="0" y1="0" x2="1" y2="1"><stop offset="0" stop-color="#3a7ae0"/><stop offset=".5" stop-color="#35b0f0"/><stop offset="1" stop-color="#1030a8"/></linearGradient></defs><path d="M9 0.500l8.500 3-1.500 11-9 2.500-6.500-5 1-8z" fill="#e9e9ee" opacity=".75"/><rect x="2.500" y="3" width="14" height="11" rx="2.500" fill="#1a2fa8"/><rect x="4.500" y="4.500" width="11" height="8" rx="1" fill="url(#lgc1884)"/><path d="M5 5l6.500 3.500L5 12z" fill="#f5e63c"/><path d="M5.500 9.500h10" stroke="#7fd0ff" stroke-width="1" opacity=".6"/></svg>
<div class="t dj" style="left:1861px;top:275.8px;font-size:12px">100</div>
<div class="t dj" style="left:1861px;top:347.8px;font-size:12px">95</div>
<div class="t dj" style="left:1861px;top:419.8px;font-size:12px">90</div>
<div class="t dj" style="left:1861px;top:491.8px;font-size:12px">85</div>
<div class="t dj" style="left:1861px;top:563.8px;font-size:12px">80</div>
<div class="t dj" style="left:1861px;top:635.8px;font-size:12px">75</div>
<div class="t dj" style="left:1861px;top:707.8px;font-size:12px">70</div>
<div class="t dj" style="left:1861px;top:779.8px;font-size:12px">65</div>
<svg style="left:0px;top:0px" width="1920" height="1080" viewBox="0 0 1920 1080"><defs><linearGradient id="cbar" x1="0" y1="0" x2="0" y2="1"><stop offset="0" stop-color="#f5f2e6"/><stop offset="0.09" stop-color="#ede59a"/><stop offset="0.17" stop-color="#eed24a"/><stop offset="0.25" stop-color="#f0be1c"/><stop offset="0.35" stop-color="#efa00f"/><stop offset="0.43" stop-color="#ea7d1a"/><stop offset="0.5" stop-color="#e05a45"/><stop offset="0.56" stop-color="#d6406e"/><stop offset="0.63" stop-color="#c52a96"/><stop offset="0.7" stop-color="#9a1ea0"/><stop offset="0.77" stop-color="#5c10a0"/><stop offset="0.84" stop-color="#30107c"/><stop offset="0.92" stop-color="#1e1058"/><stop offset="1" stop-color="#1a0f45"/></linearGradient></defs><rect x="1837.500" y="273.500" width="15.500" height="551" fill="url(#cbar)" stroke="#000" stroke-width="1"/><path d="M1837.500 282.5h3M1853 282.5h-3M1837.500 354.5h3M1853 354.5h-3M1837.500 426.5h3M1853 426.5h-3M1837.500 498.5h3M1853 498.5h-3M1837.500 570.5h3M1853 570.5h-3M1837.500 642.5h3M1853 642.5h-3M1837.500 714.5h3M1853 714.5h-3M1837.500 786.5h3M1853 786.5h-3" stroke="#000" stroke-width=".8"/></svg>
<svg style="left:0px;top:0px" width="1920" height="1080" viewBox="0 0 1920 1080"><defs><linearGradient id="gfloor" x1="1143" y1="560" x2="1609" y2="690" gradientUnits="userSpaceOnUse"><stop offset="0" stop-color="#f6f1d6"/><stop offset="0.5" stop-color="#f2edd0"/><stop offset="1" stop-color="#f5f0d4"/></linearGradient><linearGradient id="gpad" x1="1143" y1="560" x2="1609" y2="690" gradientUnits="userSpaceOnUse"><stop offset="0" stop-color="#f6f2d8"/><stop offset="0.5" stop-color="#f1ecce"/><stop offset="1" stop-color="#f5f0d6"/></linearGradient><linearGradient id="gcylh" x1="0" y1="0" x2="1" y2="0"><stop offset="0" stop-color="#d8b400"/><stop offset="0.1" stop-color="#f7d600"/><stop offset="0.3" stop-color="#ffee20"/><stop offset="0.5" stop-color="#fff56a"/><stop offset="0.72" stop-color="#f8f3b8"/><stop offset="0.9" stop-color="#ebe5c0"/><stop offset="1" stop-color="#c9c190"/></linearGradient><linearGradient id="gcylv" x1="0" y1="0" x2="0" y2="1"><stop offset="0" stop-color="#e89a00" stop-opacity="0.75"/><stop offset="0.18" stop-color="#ffd000" stop-opacity="0.25"/><stop offset="0.5" stop-color="#ffffff" stop-opacity="0"/><stop offset="0.85" stop-color="#ffffff" stop-opacity="0.5"/><stop offset="1" stop-color="#ffffff" stop-opacity="0.8"/></linearGradient><linearGradient id="grodh" x1="0" y1="0" x2="1" y2="0"><stop offset="0" stop-color="#ffffff" stop-opacity="0.0"/><stop offset="0.3" stop-color="#ffffff" stop-opacity="0.18"/><stop offset="0.6" stop-color="#000000" stop-opacity="0.0"/><stop offset="1" stop-color="#000000" stop-opacity="0.28"/></linearGradient><linearGradient id="gflange" x1="0" y1="0" x2="1" y2="1"><stop offset="0" stop-color="#f7ae12"/><stop offset="1" stop-color="#f2a008"/></linearGradient><radialGradient id="gglow2"><stop offset="0" stop-color="#fff" stop-opacity=".7"/><stop offset=".55" stop-color="#fff" stop-opacity=".35"/><stop offset="1" stop-color="#fff" stop-opacity="0"/></radialGradient><linearGradient id="grod2" x1="0" y1="462" x2="0" y2="521" gradientUnits="userSpaceOnUse"><stop offset="0" stop-color="#cf22a0"/><stop offset="0.35" stop-color="#e2328a"/><stop offset="0.7" stop-color="#ee5a55"/><stop offset="1" stop-color="#f47a28"/></linearGradient><radialGradient id="gglow1"><stop offset="0" stop-color="#fff" stop-opacity=".7"/><stop offset=".55" stop-color="#fff" stop-opacity=".35"/><stop offset="1" stop-color="#fff" stop-opacity="0"/></radialGradient><linearGradient id="grod1" x1="0" y1="495" x2="0" y2="556.5" gradientUnits="userSpaceOnUse"><stop offset="0" stop-color="#cf22a0"/><stop offset="0.35" stop-color="#e2328a"/><stop offset="0.7" stop-color="#ee5a55"/><stop offset="1" stop-color="#f47a28"/></linearGradient><radialGradient id="gglow4"><stop offset="0" stop-color="#fff" stop-opacity=".7"/><stop offset=".55" stop-color="#fff" stop-opacity=".35"/><stop offset="1" stop-color="#fff" stop-opacity="0"/></radialGradient><linearGradient id="grod4" x1="0" y1="560" x2="0" y2="619" gradientUnits="userSpaceOnUse"><stop offset="0" stop-color="#cf22a0"/><stop offset="0.35" stop-color="#e2328a"/><stop offset="0.7" stop-color="#ee5a55"/><stop offset="1" stop-color="#f47a28"/></linearGradient><radialGradient id="gglow3"><stop offset="0" stop-color="#fff" stop-opacity=".7"/><stop offset=".55" stop-color="#fff" stop-opacity=".35"/><stop offset="1" stop-color="#fff" stop-opacity="0"/></radialGradient><linearGradient id="grod3" x1="0" y1="595" x2="0" y2="659" gradientUnits="userSpaceOnUse"><stop offset="0" stop-color="#cf22a0"/><stop offset="0.35" stop-color="#e2328a"/><stop offset="0.7" stop-color="#ee5a55"/><stop offset="1" stop-color="#f47a28"/></linearGradient><linearGradient id="gup1" x1="1351.7" y1="458.4" x2="1437.5" y2="383.8" gradientUnits="userSpaceOnUse"><stop offset="0" stop-color="#2e0f78"/><stop offset="0.45" stop-color="#1f1060"/><stop offset="1" stop-color="#1a1052"/></linearGradient><linearGradient id="gside1" x1="1351.7" y1="0" x2="1431" y2="0" gradientUnits="userSpaceOnUse"><stop offset="0" stop-color="#5b12a6"/><stop offset="0.6" stop-color="#3a0f88"/><stop offset="1" stop-color="#1f1060"/></linearGradient><linearGradient id="gbend1" x1="1404.7" y1="402" x2="1396" y2="416.6" gradientUnits="userSpaceOnUse"><stop offset="0" stop-color="#1a1052" stop-opacity="0"/><stop offset="0.5" stop-color="#0c0530" stop-opacity="0.75"/><stop offset="1" stop-color="#1a1052" stop-opacity="0"/></linearGradient><linearGradient id="gend1" x1="1242.9" y1="495.7" x2="1295.9" y2="467.1" gradientUnits="userSpaceOnUse"><stop offset="0" stop-color="#a3239b"/><stop offset="0.45" stop-color="#6a109c"/><stop offset="1" stop-color="#3f0c8e"/></linearGradient><linearGradient id="gmid1" x1="1281.9" y1="458.4" x2="1339.3" y2="468" gradientUnits="userSpaceOnUse"><stop offset="0" stop-color="#4a0d92"/><stop offset="1" stop-color="#2a0f72"/></linearGradient><linearGradient id="gup2" x1="1496.7" y1="555" x2="1582.5" y2="474.2" gradientUnits="userSpaceOnUse"><stop offset="0" stop-color="#2e0f78"/><stop offset="0.45" stop-color="#1f1060"/><stop offset="1" stop-color="#1a1052"/></linearGradient><linearGradient id="gside2" x1="1496.7" y1="0" x2="1576.5" y2="0" gradientUnits="userSpaceOnUse"><stop offset="0" stop-color="#5b12a6"/><stop offset="0.6" stop-color="#3a0f88"/><stop offset="1" stop-color="#1f1060"/></linearGradient><linearGradient id="gbend2" x1="1548.3" y1="495" x2="1539" y2="508.5" gradientUnits="userSpaceOnUse"><stop offset="0" stop-color="#1a1052" stop-opacity="0"/><stop offset="0.5" stop-color="#0c0530" stop-opacity="0.75"/><stop offset="1" stop-color="#1a1052" stop-opacity="0"/></linearGradient><linearGradient id="gend2" x1="1386" y1="596.5" x2="1436.5" y2="562.7" gradientUnits="userSpaceOnUse"><stop offset="0" stop-color="#a3239b"/><stop offset="0.45" stop-color="#6a109c"/><stop offset="1" stop-color="#3f0c8e"/></linearGradient><linearGradient id="gmid2" x1="1422.5" y1="554.2" x2="1483.3" y2="564.4" gradientUnits="userSpaceOnUse"><stop offset="0" stop-color="#4a0d92"/><stop offset="1" stop-color="#2a0f72"/></linearGradient></defs><path d="M1124.5 379.2L1133.0 553.9M1173.3 362.0L1179.7 537.0M1220.3 347.2L1226.7 519.4M1267.2 331.2L1271.1 503.1M1313.3 315.0L1315.5 486.9M1125.8 407.0L1349.5 330.0M1128.3 456.5L1349.5 379.2M1130.5 505.5L1351.8 428.4M1133.0 553.9L1341.0 477.0M1372.5 307.0L1372.8 475.6M1440.3 348.1L1439.5 520.8M1512.1 392.2L1508.0 567.5M1587.5 437.2L1581.3 617.5M1667.5 486.3L1657.8 672.0M1370.0 475.6L1664.5 672.2M1372.8 431.0L1667.0 622.0M1372.8 386.0L1669.5 571.5M1372.8 341.0L1672.0 519.2M1142.5 574.2L1420.8 788.3M1420.8 788.3L1645.0 686.3M1142.5 574.2L1153.3 569.5M1209.0 625.3L1216.0 622.3M1277.0 677.6L1284.0 674.6M1346.0 730.7L1353.0 727.7M1420.8 788.3L1424.5 792.0M1470.8 766.7L1456.7 756.7M1520.0 746.7L1505.0 735.8M1566.3 725.0L1552.5 715.0M1612.5 703.8L1598.8 695.0M1547.5 643.8L1568.8 634.5M1406.9 546.1L1427.4 538.2M1354.2 495.8L1362.0 493.4" fill="none" stroke="#808080" stroke-width="1" opacity="0.85"/><polygon points="1354.1,310.5 1652.5,490.5 1652.5,555.5 1354.1,367.8" fill="#1a1050" /><polygon points="1354.1,310.3 1357.5,308.2 1658.3,493.3 1652.5,490.5" fill="#241868" /><polygon points="1652.5,490.5 1658.3,493.3 1655.8,556.7 1652.5,555.5" fill="#1f1560" /><path d="M1354.1 310.5L1652.5 490.5M1357.5 308.2L1658.3 493.3M1354.1 310.3L1357.5 308.2M1354.1 310.5L1354.1 367.8M1354.1 367.8L1652.5 555.5M1652.5 490.5L1652.5 555.5M1658.3 493.3L1655.8 556.7M1652.5 555.5L1655.8 556.7M1652.5 490.5L1658.3 493.3" fill="none" stroke="#f4f0ff" stroke-width="0.7" opacity="0.9"/><polygon points="1143.3,561.7 1417.5,770.0 1609.2,687.5 1609.2,691.0 1418.0,773.8 1143.3,564.7" fill="#e6dfbc" /><polygon points="1326.7,492.5 1609.2,687.5 1417.5,770.0 1143.3,561.7" fill="url(#gfloor)" stroke="#ddd6b4" stroke-width="0.8" stroke-linejoin="round" /><polygon points="1244.6,524.9 1263.9,538.7 1289.4,529.0 1377.6,591.6 1351.6,602.0 1372.3,616.9 1455.2,583.6 1434.3,569.1 1409.5,578.9 1321.0,517.0 1345.4,507.7 1325.9,494.2" fill="#d6cfae" /><polygon points="1244.6,524.9 1263.9,538.7 1289.4,529.0 1377.6,591.6 1351.6,602.0 1372.3,616.9 1455.2,583.6 1434.3,569.1 1409.5,578.9 1321.0,517.0 1345.4,507.7 1325.9,494.2" fill="none" stroke="#d6cfae" stroke-width="1.2" transform="translate(0,-1.100)"/><polygon points="1244.6,522.7 1263.9,536.5 1289.4,526.8 1377.6,589.4 1351.6,599.8 1372.3,614.7 1455.2,581.4 1434.3,566.9 1409.5,576.7 1321.0,514.8 1345.4,505.5 1325.9,492.0" fill="url(#gpad)" stroke="#dcd6b6" stroke-width="0.7" stroke-linejoin="round" /><polygon points="1377.8,620.9 1398.9,636.0 1425.0,625.4 1521.5,694.0 1495.0,705.3 1517.6,721.6 1602.3,685.3 1579.4,669.4 1554.1,680.1 1457.2,612.3 1482.1,602.2 1460.8,587.5" fill="#d6cfae" /><polygon points="1377.8,620.9 1398.9,636.0 1425.0,625.4 1521.5,694.0 1495.0,705.3 1517.6,721.6 1602.3,685.3 1579.4,669.4 1554.1,680.1 1457.2,612.3 1482.1,602.2 1460.8,587.5" fill="none" stroke="#d6cfae" stroke-width="1.2" transform="translate(0,-1.100)"/><polygon points="1377.8,618.7 1398.9,633.8 1425.0,623.2 1521.5,691.8 1495.0,703.1 1517.6,719.4 1602.3,683.1 1579.4,667.2 1554.1,677.9 1457.2,610.1 1482.1,600.0 1460.8,585.3" fill="url(#gpad)" stroke="#dcd6b6" stroke-width="0.7" stroke-linejoin="round" /><polygon points="1151.3,560.1 1170.3,574.4 1196.7,564.3 1283.4,629.1 1256.6,639.7 1276.9,655.1 1362.5,620.8 1341.9,605.8 1316.3,616.0 1229.1,552.0 1254.3,542.4 1235.1,528.5" fill="#d6cfae" /><polygon points="1151.3,560.1 1170.3,574.4 1196.7,564.3 1283.4,629.1 1256.6,639.7 1276.9,655.1 1362.5,620.8 1341.9,605.8 1316.3,616.0 1229.1,552.0 1254.3,542.4 1235.1,528.5" fill="none" stroke="#d6cfae" stroke-width="1.2" transform="translate(0,-1.100)"/><polygon points="1151.3,557.9 1170.3,572.2 1196.7,562.1 1283.4,626.9 1256.6,637.5 1276.9,652.9 1362.5,618.6 1341.9,603.6 1316.3,613.8 1229.1,549.8 1254.3,540.2 1235.1,526.3" fill="url(#gpad)" stroke="#dcd6b6" stroke-width="0.7" stroke-linejoin="round" /><polygon points="1282.4,659.3 1303.1,674.9 1330.1,664.0 1425.2,734.9 1397.8,746.6 1420.1,763.5 1507.7,725.9 1485.0,709.5 1458.9,720.6 1363.3,650.5 1389.1,640.0 1368.1,624.8" fill="#d6cfae" /><polygon points="1282.4,659.3 1303.1,674.9 1330.1,664.0 1425.2,734.9 1397.8,746.6 1420.1,763.5 1507.7,725.9 1485.0,709.5 1458.9,720.6 1363.3,650.5 1389.1,640.0 1368.1,624.8" fill="none" stroke="#d6cfae" stroke-width="1.2" transform="translate(0,-1.100)"/><polygon points="1282.4,657.1 1303.1,672.7 1330.1,661.8 1425.2,732.7 1397.8,744.4 1420.1,761.3 1507.7,723.7 1485.0,707.3 1458.9,718.4 1363.3,648.3 1389.1,637.8 1368.1,622.6" fill="url(#gpad)" stroke="#dcd6b6" stroke-width="0.7" stroke-linejoin="round" /><ellipse cx="1353.0" cy="557.0" rx="29.8" ry="14.9" fill="url(#gglow2)"/><path d="M1330.0 532.1L1330.0 553.1A17.0 7.9 0 0 0 1364.0 553.1L1364.0 532.1Z" fill="url(#gcylh)" /><path d="M1330.0 532.1L1330.0 553.1A17.0 7.9 0 0 0 1364.0 553.1L1364.0 532.1Z" fill="url(#gcylv)" /><path d="M1330.0 532.1L1330.0 553.1A17.0 7.9 0 0 0 1364.0 553.1L1364.0 532.1Z" fill="none" stroke="#e8dfa0" stroke-width="0.6" stroke-linejoin="round" /><path d="M1332.5 537.3L1332.5 556.3" fill="none" stroke="#fffbe0" stroke-width="0.6" stroke-linejoin="round" /><ellipse cx="1347.3" cy="530.0" rx="22.3" ry="10.3" fill="#e39a06"/><ellipse cx="1347.3" cy="529.2" rx="22.0" ry="10.3" fill="none" stroke="#ffe9a8" stroke-width=".6"/><ellipse cx="1347.3" cy="527.0" rx="22.3" ry="10.3" fill="url(#gflange)" stroke="#ffe9b0" stroke-width=".6"/><ellipse cx="1347.0" cy="526.0" rx="10.5" ry="5.2" fill="#ec8a10" stroke="#ffe2a0" stroke-width=".6"/><ellipse cx="1347.0" cy="524.8" rx="8.0" ry="3.7" fill="#f07a1c"/><path d="M1338.4 518.0V524.5A8.6 3.6 0 0 0 1355.6 524.5V518.0Z" fill="#f4792a" stroke="#ffd9c0" stroke-width="0.6" stroke-linejoin="round" /><ellipse cx="1347.0" cy="518.0" rx="8.6" ry="3.6" fill="#f58a3a" stroke="#ffd9c0" stroke-width=".6"/><path d="M1341.0 462.0V519.5A6.0 2.2 0 0 0 1353.0 519.5V462.0Z" fill="url(#grod2)" /><path d="M1341.0 462.0V519.5A6.0 2.2 0 0 0 1353.0 519.5V462.0Z" fill="url(#grodh)" /><path d="M1341.4 462.0V519.0" fill="none" stroke="#ffc8e8" stroke-width="0.5" stroke-linejoin="round" /><ellipse cx="1260.3" cy="593.3" rx="30.5" ry="15.6" fill="url(#gglow1)"/><path d="M1236.9 567.9L1236.9 589.1A17.4 8.2 0 0 0 1271.8 589.1L1271.8 567.9Z" fill="url(#gcylh)" /><path d="M1236.9 567.9L1236.9 589.1A17.4 8.2 0 0 0 1271.8 589.1L1271.8 567.9Z" fill="url(#gcylv)" /><path d="M1236.9 567.9L1236.9 589.1A17.4 8.2 0 0 0 1271.8 589.1L1271.8 567.9Z" fill="none" stroke="#e8dfa0" stroke-width="0.6" stroke-linejoin="round" /><path d="M1239.4 573.3L1239.4 592.4" fill="none" stroke="#fffbe0" stroke-width="0.6" stroke-linejoin="round" /><ellipse cx="1254.2" cy="565.5" rx="23.0" ry="10.8" fill="#e39a06"/><ellipse cx="1254.2" cy="564.7" rx="22.7" ry="10.8" fill="none" stroke="#ffe9a8" stroke-width=".6"/><ellipse cx="1254.2" cy="562.5" rx="23.0" ry="10.8" fill="url(#gflange)" stroke="#ffe9b0" stroke-width=".6"/><ellipse cx="1252.8" cy="561.5" rx="10.8" ry="5.4" fill="#ec8a10" stroke="#ffe2a0" stroke-width=".6"/><ellipse cx="1252.8" cy="560.3" rx="8.3" ry="3.9" fill="#f07a1c"/><path d="M1244.1 553.5V560.0A8.6 3.6 0 0 0 1261.4 560.0V553.5Z" fill="#f4792a" stroke="#ffd9c0" stroke-width="0.6" stroke-linejoin="round" /><ellipse cx="1252.8" cy="553.5" rx="8.6" ry="3.6" fill="#f58a3a" stroke="#ffd9c0" stroke-width=".6"/><path d="M1246.7 495.0V555.0A6.0 2.2 0 0 0 1258.8 555.0V495.0Z" fill="url(#grod1)" /><path d="M1246.7 495.0V555.0A6.0 2.2 0 0 0 1258.8 555.0V495.0Z" fill="url(#grodh)" /><path d="M1247.1 495.0V554.5" fill="none" stroke="#ffc8e8" stroke-width="0.5" stroke-linejoin="round" /><ellipse cx="1493.5" cy="656.8" rx="30.6" ry="16.7" fill="url(#gglow4)"/><path d="M1470.0 630.9L1470.0 652.0A17.5 8.8 0 0 0 1505.0 652.0L1505.0 630.9Z" fill="url(#gcylh)" /><path d="M1470.0 630.9L1470.0 652.0A17.5 8.8 0 0 0 1505.0 652.0L1505.0 630.9Z" fill="url(#gcylv)" /><path d="M1470.0 630.9L1470.0 652.0A17.5 8.8 0 0 0 1505.0 652.0L1505.0 630.9Z" fill="none" stroke="#e8dfa0" stroke-width="0.6" stroke-linejoin="round" /><path d="M1472.5 636.7L1472.5 655.5" fill="none" stroke="#fffbe0" stroke-width="0.6" stroke-linejoin="round" /><ellipse cx="1488.3" cy="628.0" rx="23.3" ry="11.7" fill="#e39a06"/><ellipse cx="1488.3" cy="627.2" rx="23.0" ry="11.7" fill="none" stroke="#ffe9a8" stroke-width=".6"/><ellipse cx="1488.3" cy="625.0" rx="23.3" ry="11.7" fill="url(#gflange)" stroke="#ffe9b0" stroke-width=".6"/><ellipse cx="1489.2" cy="624.0" rx="11.0" ry="5.8" fill="#ec8a10" stroke="#ffe2a0" stroke-width=".6"/><ellipse cx="1489.2" cy="622.8" rx="8.4" ry="4.2" fill="#f07a1c"/><path d="M1480.7 616.0V622.5A8.5 3.5 0 0 0 1497.6 622.5V616.0Z" fill="#f4792a" stroke="#ffd9c0" stroke-width="0.6" stroke-linejoin="round" /><ellipse cx="1489.2" cy="616.0" rx="8.5" ry="3.5" fill="#f58a3a" stroke="#ffd9c0" stroke-width=".6"/><path d="M1483.3 560.0V617.5A5.9 2.2 0 0 0 1495.0 617.5V560.0Z" fill="url(#grod4)" /><path d="M1483.3 560.0V617.5A5.9 2.2 0 0 0 1495.0 617.5V560.0Z" fill="url(#grodh)" /><path d="M1483.7 560.0V617.0" fill="none" stroke="#ffc8e8" stroke-width="0.5" stroke-linejoin="round" /><ellipse cx="1398.9" cy="696.8" rx="31.3" ry="17.6" fill="url(#gglow3)"/><path d="M1375.0 671.1L1375.0 691.5A17.9 9.3 0 0 0 1410.8 691.5L1410.8 671.1Z" fill="url(#gcylh)" /><path d="M1375.0 671.1L1375.0 691.5A17.9 9.3 0 0 0 1410.8 691.5L1410.8 671.1Z" fill="url(#gcylv)" /><path d="M1375.0 671.1L1375.0 691.5A17.9 9.3 0 0 0 1410.8 691.5L1410.8 671.1Z" fill="none" stroke="#e8dfa0" stroke-width="0.6" stroke-linejoin="round" /><path d="M1377.5 677.3L1377.5 695.2" fill="none" stroke="#fffbe0" stroke-width="0.6" stroke-linejoin="round" /><ellipse cx="1392.8" cy="668.0" rx="23.8" ry="12.3" fill="#e39a06"/><ellipse cx="1392.8" cy="667.2" rx="23.4" ry="12.3" fill="none" stroke="#ffe9a8" stroke-width=".6"/><ellipse cx="1392.8" cy="665.0" rx="23.8" ry="12.3" fill="url(#gflange)" stroke="#ffe9b0" stroke-width=".6"/><ellipse cx="1393.2" cy="664.0" rx="11.2" ry="6.2" fill="#ec8a10" stroke="#ffe2a0" stroke-width=".6"/><ellipse cx="1393.2" cy="662.8" rx="8.5" ry="4.4" fill="#f07a1c"/><path d="M1384.9 656.0V662.5A8.3 3.5 0 0 0 1401.6 662.5V656.0Z" fill="#f4792a" stroke="#ffd9c0" stroke-width="0.6" stroke-linejoin="round" /><ellipse cx="1393.2" cy="656.0" rx="8.3" ry="3.5" fill="#f58a3a" stroke="#ffd9c0" stroke-width=".6"/><path d="M1387.5 595.0V657.5A5.8 2.2 0 0 0 1399.0 657.5V595.0Z" fill="url(#grod3)" /><path d="M1387.5 595.0V657.5A5.8 2.2 0 0 0 1399.0 657.5V595.0Z" fill="url(#grodh)" /><path d="M1387.9 595.0V657.0" fill="none" stroke="#ffc8e8" stroke-width="0.5" stroke-linejoin="round" /><polygon points="1437.5,383.8 1440.5,385.6 1440.5,421.3 1437.8,419.0" fill="#15093f" stroke="#f4f0ff" stroke-width="0.6" stroke-linejoin="round" /><polygon points="1404.1,366.9 1408.6,364.7 1439.5,384.4 1440.5,385.6 1437.5,383.8" fill="#2a1c72" stroke="#f4f0ff" stroke-width="0.6" stroke-linejoin="round" /><polygon points="1349.2,459.9 1437.0,428.3 1438.0,433.8 1349.7,464.9" fill="url(#gside1)" stroke="#f4f0ff" stroke-width="0.5" stroke-linejoin="round" /><path d="M1404.1 366.9L1437.5 383.8L1437.8 419.0Q1438.3 427.8 1431.0 429.8L1351.7 458.4L1321.9 437.4L1394.0 412.6Q1404.7 411.6 1404.7 402.0Z" fill="url(#gup1)" stroke="#f4f0ff" stroke-width="0.7" stroke-linejoin="round" /><polygon points="1404.7,402.0 1437.8,419.0 1432.0,428.8 1396.0,412.6" fill="url(#gbend1)" /><path d="M1404.7 402.0L1437.8 419.0M1397.0 411.6L1431.0 429.8M1388.0 414.9L1424.0 432.4" fill="none" stroke="#f4f0ff" stroke-width="0.6" opacity="0.9"/><polygon points="1320.5,437.4 1351.7,457.7 1339.5,467.9 1310.4,447.5" fill="#25094e" stroke="#f4f0ff" stroke-width="0.6" stroke-linejoin="round" /><path d="M1324.0 436.1L1355.2 456.4" fill="none" stroke="#f4f0ff" stroke-width="0.6" opacity="0.9"/><polygon points="1229.1,482.6 1256.9,503.5 1308.3,483.9 1308.3,482.1 1256.9,501.7 1229.1,481.0" fill="#7a1aa0" stroke="#f4f0ff" stroke-width="0.5" stroke-linejoin="round" /><polygon points="1308.3,482.1 1325.3,475.6 1325.3,477.6 1308.3,483.9" fill="#3a0f88" stroke="#f4f0ff" stroke-width="0.5" stroke-linejoin="round" /><polygon points="1229.1,481.0 1281.9,461.1 1308.3,482.1 1256.9,501.7" fill="url(#gend1)" stroke="#f4f0ff" stroke-width="0.7" stroke-linejoin="round" /><polygon points="1281.9,458.4 1311.0,478.7 1311.0,481.9 1281.9,461.6" fill="#4a0f95" stroke="#f4f0ff" stroke-width="0.5" stroke-linejoin="round" /><polygon points="1311.0,478.7 1339.3,468.0 1339.3,470.8 1311.0,481.9" fill="#2a0c6a" stroke="#f4f0ff" stroke-width="0.5" stroke-linejoin="round" /><polygon points="1281.9,458.4 1310.2,447.7 1339.3,468.0 1311.0,478.7" fill="url(#gmid1)" stroke="#f4f0ff" stroke-width="0.7" stroke-linejoin="round" /><path d="M1307.9 448.6L1337.0 468.9" fill="none" stroke="#f4f0ff" stroke-width="0.6" opacity="0.9"/><path d="M1404.7 402.0L1404.1 366.9" fill="none" stroke="#f4f0ff" stroke-width="0.7" opacity="1"/><ellipse cx="1412.5" cy="380.5" rx="2" ry="2.8" transform="rotate(-10 1412.5 380.5)" fill="none" stroke="#f4f0ff" stroke-width=".6"/><ellipse cx="1427.5" cy="389.5" rx="2" ry="2.8" transform="rotate(-10 1427.5 389.5)" fill="none" stroke="#f4f0ff" stroke-width=".6"/><ellipse cx="1412.5" cy="400.3" rx="2" ry="2.8" transform="rotate(-10 1412.5 400.3)" fill="none" stroke="#f4f0ff" stroke-width=".6"/><ellipse cx="1427.5" cy="409.5" rx="2" ry="2.8" transform="rotate(-10 1427.5 409.5)" fill="none" stroke="#f4f0ff" stroke-width=".6"/><ellipse cx="1389.5" cy="420.5" rx="3" ry="2" transform="rotate(0 1389.5 420.5)" fill="none" stroke="#f4f0ff" stroke-width=".6"/><ellipse cx="1405.0" cy="430.5" rx="3" ry="2" transform="rotate(0 1405.0 430.5)" fill="none" stroke="#f4f0ff" stroke-width=".6"/><ellipse cx="1297.0" cy="459.3" rx="3" ry="2" transform="rotate(0 1297.0 459.3)" fill="none" stroke="#f4f0ff" stroke-width=".6"/><ellipse cx="1312.0" cy="469.5" rx="3" ry="2" transform="rotate(0 1312.0 469.5)" fill="none" stroke="#f4f0ff" stroke-width=".6"/><ellipse cx="1252.5" cy="486.5" rx="5.5" ry="3.4" transform="rotate(0 1252.5 486.5)" fill="none" stroke="#f4f0ff" stroke-width=".6"/><polygon points="1582.5,474.2 1587.5,477.5 1586.0,516.0 1583.3,512.0" fill="#15093f" stroke="#f4f0ff" stroke-width="0.6" stroke-linejoin="round" /><polygon points="1548.3,456.7 1552.8,454.5 1586.5,476.3 1587.5,477.5 1582.5,474.2" fill="#2a1c72" stroke="#f4f0ff" stroke-width="0.6" stroke-linejoin="round" /><polygon points="1494.2,556.5 1582.5,523.7 1583.5,529.2 1494.7,561.5" fill="url(#gside2)" stroke="#f4f0ff" stroke-width="0.5" stroke-linejoin="round" /><path d="M1548.3 456.7L1582.5 474.2L1583.3 512.0Q1583.8 523.2 1576.5 525.2L1496.7 555.0L1465.0 531.7L1537.0 504.5Q1548.3 503.5 1548.3 495.0Z" fill="url(#gup2)" stroke="#f4f0ff" stroke-width="0.7" stroke-linejoin="round" /><polygon points="1548.3,495.0 1583.3,512.0 1577.5,524.2 1539.0,504.5" fill="url(#gbend2)" /><path d="M1548.3 495.0L1583.3 512.0M1540.0 503.5L1576.5 525.2M1531.0 506.8L1569.5 527.8" fill="none" stroke="#f4f0ff" stroke-width="0.6" opacity="0.9"/><polygon points="1463.3,532.5 1495.0,555.8 1483.3,564.2 1450.0,542.0" fill="#25094e" stroke="#f4f0ff" stroke-width="0.6" stroke-linejoin="round" /><path d="M1466.8 531.2L1498.5 554.5" fill="none" stroke="#f4f0ff" stroke-width="0.6" opacity="0.9"/><polygon points="1368.3,579.9 1400.0,604.3 1453.3,581.0 1453.3,579.2 1400.0,602.5 1368.3,578.3" fill="#7a1aa0" stroke="#f4f0ff" stroke-width="0.5" stroke-linejoin="round" /><polygon points="1453.3,579.2 1470.3,572.7 1470.3,574.7 1453.3,581.0" fill="#3a0f88" stroke="#f4f0ff" stroke-width="0.5" stroke-linejoin="round" /><polygon points="1368.3,578.3 1422.5,556.7 1453.3,579.2 1400.0,602.5" fill="url(#gend2)" stroke="#f4f0ff" stroke-width="0.7" stroke-linejoin="round" /><polygon points="1422.5,554.2 1452.5,578.3 1452.5,581.5 1422.5,557.4" fill="#4a0f95" stroke="#f4f0ff" stroke-width="0.5" stroke-linejoin="round" /><polygon points="1452.5,578.3 1483.3,564.4 1483.3,567.2 1452.5,581.5" fill="#2a0c6a" stroke="#f4f0ff" stroke-width="0.5" stroke-linejoin="round" /><polygon points="1422.5,554.2 1450.0,542.2 1483.3,564.4 1452.5,578.3" fill="url(#gmid2)" stroke="#f4f0ff" stroke-width="0.7" stroke-linejoin="round" /><path d="M1447.7 543.1L1481.0 565.3" fill="none" stroke="#f4f0ff" stroke-width="0.6" opacity="0.9"/><path d="M1548.3 495.0L1548.3 456.7" fill="none" stroke="#f4f0ff" stroke-width="0.7" opacity="1"/><ellipse cx="1557.0" cy="471.5" rx="2.2" ry="3" transform="rotate(-10 1557.0 471.5)" fill="none" stroke="#f4f0ff" stroke-width=".6"/><ellipse cx="1574.5" cy="482.0" rx="2.2" ry="3" transform="rotate(-10 1574.5 482.0)" fill="none" stroke="#f4f0ff" stroke-width=".6"/><ellipse cx="1556.5" cy="492.0" rx="2.2" ry="3" transform="rotate(-10 1556.5 492.0)" fill="none" stroke="#f4f0ff" stroke-width=".6"/><ellipse cx="1574.0" cy="502.5" rx="2.2" ry="3" transform="rotate(-10 1574.0 502.5)" fill="none" stroke="#f4f0ff" stroke-width=".6"/><ellipse cx="1533.0" cy="513.0" rx="3.2" ry="2.2" transform="rotate(0 1533.0 513.0)" fill="none" stroke="#f4f0ff" stroke-width=".6"/><ellipse cx="1550.0" cy="524.5" rx="3.2" ry="2.2" transform="rotate(0 1550.0 524.5)" fill="none" stroke="#f4f0ff" stroke-width=".6"/><ellipse cx="1438.0" cy="555.5" rx="3.2" ry="2.2" transform="rotate(0 1438.0 555.5)" fill="none" stroke="#f4f0ff" stroke-width=".6"/><ellipse cx="1455.0" cy="567.5" rx="3.2" ry="2.2" transform="rotate(0 1455.0 567.5)" fill="none" stroke="#f4f0ff" stroke-width=".6"/><ellipse cx="1393.0" cy="586.0" rx="6" ry="3.7" transform="rotate(0 1393.0 586.0)" fill="none" stroke="#f4f0ff" stroke-width=".6"/></svg>
<div class="t dj" style="left:1374.7px;top:286.7px;font-size:12px">400</div>
<div class="t dj" style="left:1443.5px;top:327.9px;font-size:12px">200</div>
<div class="t dj" style="left:1536.3px;top:338.6px;font-size:12px">mm</div>
<div class="t dj" style="left:1517.2px;top:370.9px;font-size:12px">0</div>
<div class="t dj" style="left:1589.4px;top:416.8px;font-size:12px">-200</div>
<div class="t dj" style="left:1668.5px;top:465.6px;font-size:12px">-400</div>
<div class="t dj" style="left:1682.5px;top:511.7px;font-size:12px">300</div>
<div class="t dj" style="left:1678.5px;top:564.6px;font-size:12px">200</div>
<div class="t dj" style="left:1712.5px;top:576.8px;font-size:12px">mm</div>
<div class="t dj" style="left:1674.5px;top:615.9px;font-size:12px">100</div>
<div class="t dj" style="left:1673.5px;top:665.3px;font-size:12px">0</div>
<div class="t dj" style="left:1612.4px;top:713.1px;font-size:12px">200</div>
<div class="t dj" style="left:1565.8px;top:733.0px;font-size:12px">100</div>
<div class="t dj" style="left:1521.8px;top:753.4px;font-size:12px">0</div>
<div class="t dj" style="left:1468.3px;top:776.1px;font-size:12px">-100</div>
<div class="t dj" style="left:1554.2px;top:780.2px;font-size:12px">mm</div>
<div class="t dj" style="left:1419.3px;top:796.6px;font-size:12px">-200</div>
<svg style="left:0px;top:0px" width="1920" height="1080" viewBox="0 0 1920 1080"><path d="M1009.700 816.500V797" stroke="#4a7fbd" stroke-width="2.400"/><path d="M1009.700 790.300l-3.100 8.300h6.200z" fill="#4a7fbd"/><path d="M1009.700 816.100L998.500 807.500" stroke="#4aa83a" stroke-width="2.200"/><path d="M992.200 803.600l8.600 1.200-3.600 5.200z" fill="#4aa83a"/><path d="M1009.700 816.100l17-6.500" stroke="#e0185a" stroke-width="2.200"/><path d="M1033.600 806.700l-8.700-.2 2.300 6z" fill="#e0185a"/><text x="1007" y="786.700" font-family="DejaVu Sans,sans-serif" font-size="12">z</text><text x="984.500" y="801" font-family="DejaVu Sans,sans-serif" font-size="12">y</text><text x="1037.300" y="806.700" font-family="DejaVu Sans,sans-serif" font-size="12">x</text></svg>
<div class="a" style="left:966px;top:895px;width:942px;height:1px;background:#d2d2d2"></div>
<div class="a" style="left:970px;top:872px;width:89px;height:24px;background:#fafbfe;border:1px solid #d2d2d2;border-bottom:none"></div>
<div class="t " style="left:975px;top:878px;letter-spacing:0.191px;font-size:12.5px;color:#2f5597;font-size:12.5px;">Messages</div>
<svg style="left:1040px;top:878px" width="12" height="12" viewBox="0 0 12 12"><path d="M1.500 1.500l8 8M9.500 1.500l-8 8" stroke="#b8c1d0" stroke-width="1.100"/></svg>
<div class="a" style="left:1067px;top:873px;width:60px;height:22px;background:#ebebeb"></div>
<div class="t " style="left:1071px;top:878px;letter-spacing:0.248px;font-size:12.5px;font-size:12.5px;">Progress</div>
<div class="a" style="left:1135px;top:873px;width:30px;height:22px;background:#ebebeb"></div>
<div class="t " style="left:1139px;top:878px;letter-spacing:0.215px;font-size:12.5px;font-size:12.5px;">Log</div>
<svg style="left:1881px;top:879px" width="24" height="12" viewBox="0 0 24 12"><path d="M1 3h7l-3.500 4z" fill="#c3cad6"/><path d="M16 0.500h5v5h1.500v1.500h-3.200v4h-1.300v-4h-3.200v-1.500h1.200z" fill="#c3cad6"/></svg>
<svg style="left:974px;top:903px" width="14" height="16" viewBox="0 0 14 16"><path d="M2 0.500l4.500 9" stroke="#444" stroke-width="1.600"/><path d="M4.500 9.500l3.500-1.500 3.500 5.500-4.500 2z" fill="#f0c9a0" stroke="#b5793a" stroke-width=".7"/><path d="M4.800 9.800l3.200-1.500" stroke="#c0392b" stroke-width="1"/></svg>
<div class="a" style="left:970px;top:924px;width:934px;height:115px;background:#fafbfe;border:1px solid #cfcfcf"></div>
</body></html>
